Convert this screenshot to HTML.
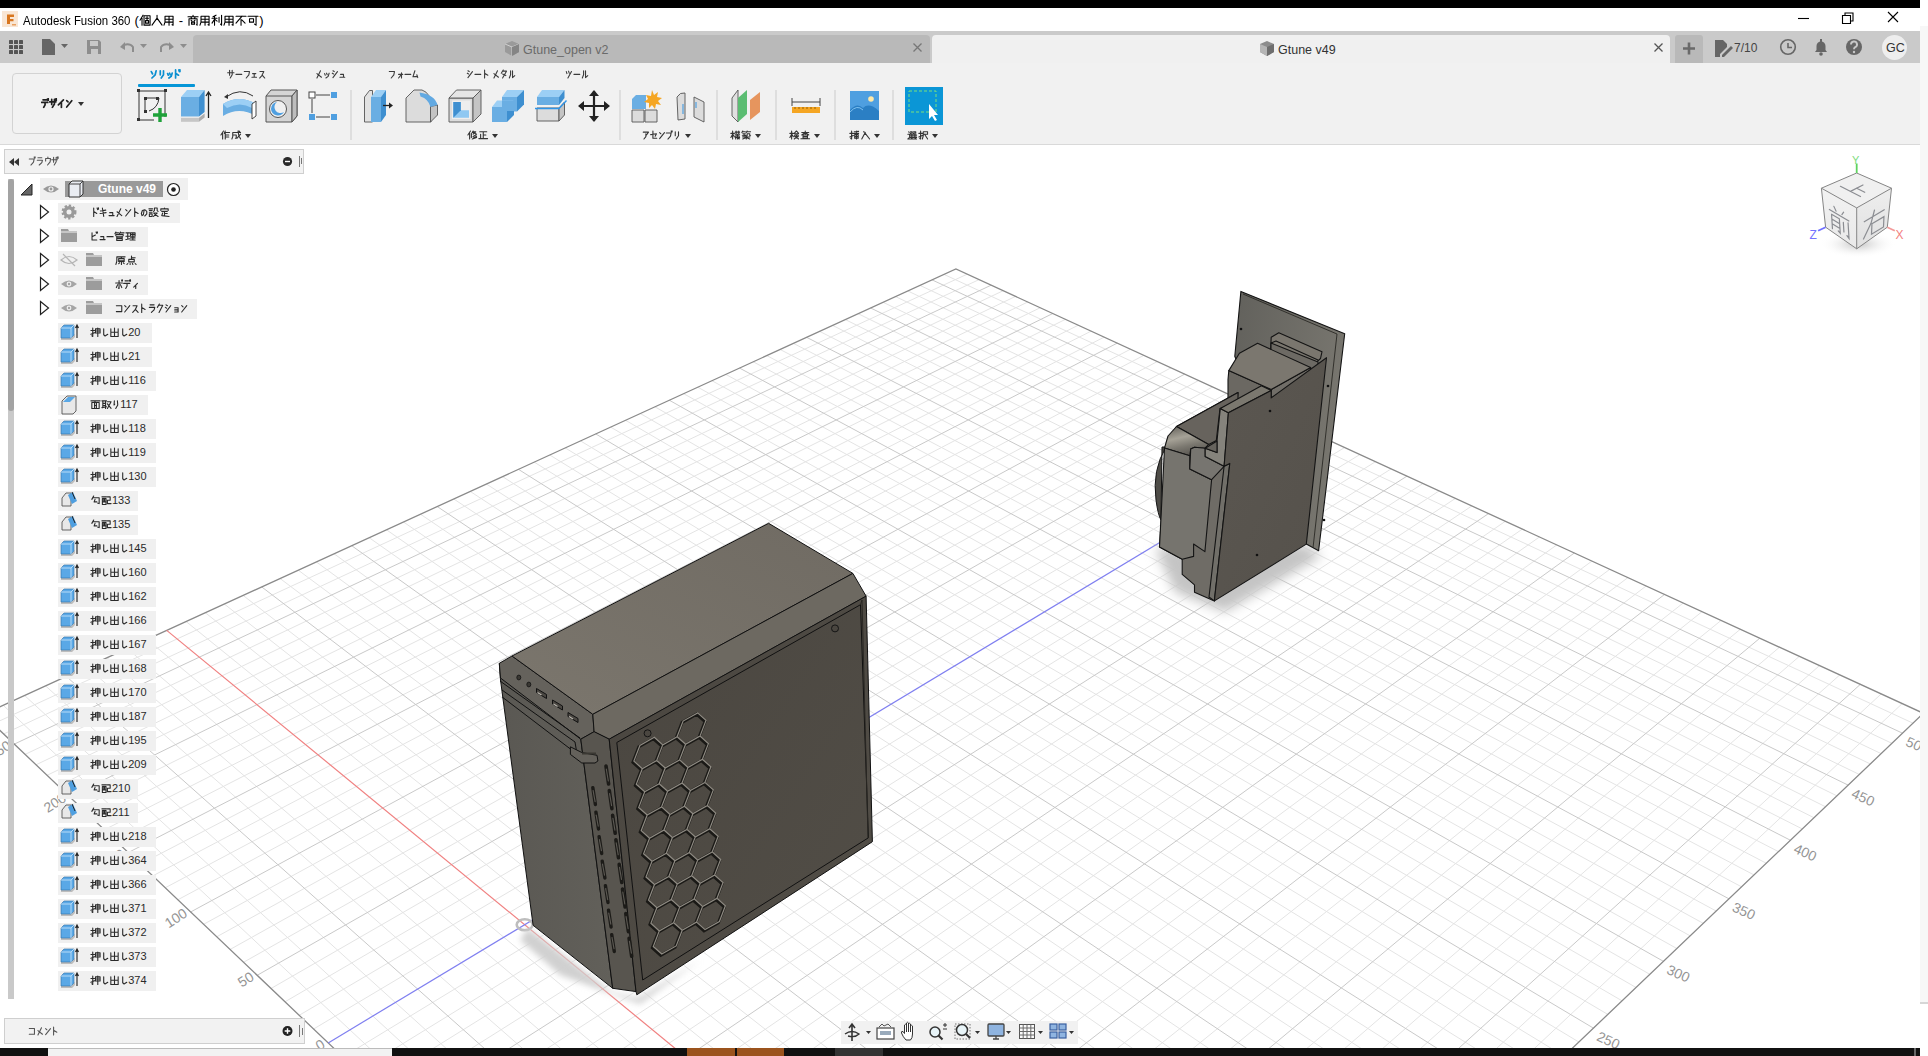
<!DOCTYPE html>
<html><head><meta charset="utf-8">
<style>
*{box-sizing:border-box;margin:0;padding:0}
html,body{width:1928px;height:1056px;overflow:hidden;background:#fff;font-family:"Liberation Sans",sans-serif;color:#333}
.abs{position:absolute}
#scene{position:absolute;left:0;top:0}
.g{display:inline-block;height:.95em;vertical-align:-.1em;overflow:visible;stroke-width:1.1px}
.bd .g{stroke-width:1.7px}
.tt .g.j{width:.93em}
.g.j{width:1em}
.g.n{width:.74em}
.g use{width:100%;height:100%}
.dd{display:inline-block;width:0;height:0;border-left:3.5px solid transparent;border-right:3.5px solid transparent;border-top:4px solid #333;margin-left:4px;vertical-align:1px}
.t{position:absolute;white-space:nowrap;font-size:11px;line-height:12px;color:#3c3c3c}
</style></head><body>
<svg id="scene" width="1928" height="1056" viewBox="0 0 1928 1056">
<defs>
<radialGradient id="sh2" cx="0.5" cy="0.5" r="0.5"><stop offset="0" stop-color="#cfcfcf"/><stop offset="1" stop-color="#fff" stop-opacity="0"/></radialGradient>
<filter id="blur6" x="-50%" y="-50%" width="200%" height="200%"><feGaussianBlur stdDeviation="6"/></filter>
<filter id="blur3" x="-50%" y="-50%" width="200%" height="200%"><feGaussianBlur stdDeviation="3"/></filter>
</defs>
<path d="M929.7 1615.5L1902.2 703.6M905.9 1592.8L1881.2 693.9M859.4 1548.6L1839.8 674.9M836.8 1527.0L1819.5 665.6M814.5 1505.8L1799.4 656.3M792.6 1485.0L1779.5 647.2M749.9 1444.3L1740.4 629.2M729.1 1424.5L1721.1 620.4M708.6 1405.0L1702.1 611.6M688.4 1385.8L1683.2 603.0M649.0 1348.3L1646.1 586.0M629.8 1329.9L1627.9 577.6M610.8 1311.9L1609.8 569.3M592.1 1294.2L1591.9 561.1M555.7 1259.4L1556.8 544.9M537.9 1242.5L1539.4 537.0M520.3 1225.8L1522.3 529.1M503.0 1209.3L1505.3 521.3M469.1 1177.1L1471.9 505.9M452.6 1161.3L1455.4 498.4M436.3 1145.8L1439.1 490.9M420.2 1130.4L1422.9 483.5M388.7 1100.5L1391.1 468.9M373.2 1085.8L1375.5 461.7M358.0 1071.3L1359.9 454.5M343.0 1057.0L1344.6 447.5M313.6 1029.0L1314.3 433.6M299.2 1015.3L1299.3 426.7M285.0 1001.8L1284.5 419.9M271.0 988.5L1269.9 413.2M243.5 962.3L1241.0 399.9M230.0 949.5L1226.7 393.4M216.7 936.8L1212.6 386.9M203.6 924.3L1198.6 380.5M177.8 899.8L1171.0 367.8M165.2 887.8L1157.4 361.5M152.7 875.9L1143.9 355.3M140.4 864.1L1130.5 349.2M116.2 841.1L1104.2 337.1M104.3 829.8L1091.2 331.1M92.6 818.6L1078.3 325.2M81.0 807.6L1065.5 319.3M58.2 785.9L1040.3 307.7M47.1 775.3L1027.8 302.0M36.0 764.8L1015.5 296.4M25.1 754.4L1003.2 290.7M3.6 734.0L979.1 279.6M-6.9 723.9L967.1 274.2M3.3 705.3L976.6 1616.6M24.6 695.5L1000.5 1593.8M45.6 685.9L1024.1 1571.4M86.9 667.0L1069.9 1527.7M107.1 657.7L1092.2 1506.4M127.2 648.5L1114.1 1485.4M147.1 639.4L1135.7 1464.8M186.1 621.5L1177.8 1424.6M205.3 612.7L1198.4 1405.0M224.3 604.0L1218.6 1385.7M243.1 595.4L1238.5 1366.8M280.1 578.5L1277.3 1329.7M298.3 570.2L1296.3 1311.6M316.3 561.9L1315.0 1293.8M334.1 553.8L1333.4 1276.2M369.2 537.7L1369.3 1241.9M386.5 529.8L1386.9 1225.2M403.5 522.0L1404.2 1208.7M420.5 514.2L1421.2 1192.4M453.8 499.0L1454.6 1160.6M470.2 491.4L1470.9 1145.0M486.4 484.0L1487.0 1129.6M502.5 476.6L1502.8 1114.5M534.2 462.1L1533.9 1084.9M549.8 455.0L1549.1 1070.4M565.2 447.9L1564.0 1056.1M580.5 440.9L1578.8 1042.0M610.7 427.1L1607.8 1014.4M625.6 420.3L1622.0 1000.8M640.3 413.5L1636.0 987.5M654.9 406.8L1649.8 974.3M683.7 393.7L1676.8 948.5M697.8 387.2L1690.1 935.8M711.9 380.7L1703.2 923.3M725.8 374.4L1716.1 911.0M753.2 361.8L1741.5 886.8M766.8 355.6L1753.9 874.9M780.2 349.5L1766.2 863.2M793.5 343.4L1778.4 851.6M819.7 331.4L1802.2 828.9M832.6 325.4L1813.9 817.7M845.4 319.6L1825.4 806.7M858.2 313.7L1836.8 795.8M883.2 302.3L1859.2 774.4M895.6 296.6L1870.2 763.9M907.9 291.0L1881.1 753.6M920.0 285.4L1891.9 743.3M944.0 274.4L1913.0 723.2" stroke="#e4e4e4" stroke-width="1" fill="none"/>
<path d="M882.4 1570.5L1860.4 684.3M771.1 1464.5L1759.8 638.2M668.5 1366.9L1664.6 594.4M573.8 1276.7L1574.3 553.0M485.9 1193.1L1488.5 513.6M404.3 1115.3L1407.0 476.1M257.2 975.3L1255.3 406.5M190.6 912.0L1184.7 374.1M128.2 852.6L1117.3 343.1M69.6 796.7L1052.8 313.5M14.3 744.1L991.1 285.2M66.3 676.4L1047.2 1549.3M261.7 586.9L1258.1 1348.1M351.7 545.7L1351.5 1258.9M437.2 506.5L1438.0 1176.4M518.4 469.3L1518.5 1099.6M595.7 433.9L1593.4 1028.1M669.3 400.2L1663.4 961.3M739.6 368.1L1728.9 898.8M806.6 337.3L1790.3 840.2M870.7 308.0L1848.1 785.1M932.1 279.9L1902.5 733.2" stroke="#c9c9c9" stroke-width="1" fill="none"/>
<path d="M-16.8 714.5L955.9 269.0L1923.4 713.3L953.8 1638.4Z" stroke="#8a8a8a" stroke-width="1.3" fill="none"/>
<path d="M166.7 630.4L1157.0 1444.6" stroke="#f08080" stroke-width="1.2"/>
<path d="M328.2 1042.9L1329.3 440.5" stroke="#7f7ff0" stroke-width="1.2"/>
<ellipse cx="524.7" cy="924.7" rx="8" ry="5.5" stroke="#bdbdbd" stroke-width="2.6" fill="none"/>
<g font-family="Liberation Sans" font-size="14" fill="#959595"><text x="324.2" y="1044.9" transform="rotate(-33 328.2 1042.9)" text-anchor="end">0</text><text x="253.2" y="977.3" transform="rotate(-33 257.2 975.3)" text-anchor="end">50</text><text x="186.6" y="914.0" transform="rotate(-33 190.6 912.0)" text-anchor="end">100</text><text x="124.2" y="854.6" transform="rotate(-33 128.2 852.6)" text-anchor="end">150</text><text x="65.6" y="798.7" transform="rotate(-33 69.6 796.7)" text-anchor="end">200</text><text x="10.3" y="746.1" transform="rotate(-33 14.3 744.1)" text-anchor="end">250</text><text x="1164.0" y="1454.6" transform="rotate(24 1157.0 1444.6)">0</text><text x="1265.1" y="1358.1" transform="rotate(24 1258.1 1348.1)">50</text><text x="1358.5" y="1268.9" transform="rotate(24 1351.5 1258.9)">100</text><text x="1445.0" y="1186.4" transform="rotate(24 1438.0 1176.4)">150</text><text x="1525.5" y="1109.6" transform="rotate(24 1518.5 1099.6)">200</text><text x="1600.4" y="1038.1" transform="rotate(24 1593.4 1028.1)">250</text><text x="1670.4" y="971.3" transform="rotate(24 1663.4 961.3)">300</text><text x="1735.9" y="908.8" transform="rotate(24 1728.9 898.8)">350</text><text x="1797.3" y="850.2" transform="rotate(24 1790.3 840.2)">400</text><text x="1855.1" y="795.1" transform="rotate(24 1848.1 785.1)">450</text><text x="1909.5" y="743.2" transform="rotate(24 1902.5 733.2)">500</text></g>

<g filter="url(#blur6)"><polygon points="1155.0,548.0 1306.0,545.0 1322.0,556.0 1225.0,612.0 1175.0,592.0" fill="#c4c4c4"/></g>
<g filter="url(#blur3)"><polygon points="528.0,928.0 612.0,992.0 638.0,998.0 700.0,960.0 640.0,1004.0 560.0,975.0 520.0,940.0" fill="#d0d0d0"/></g>
<defs><linearGradient id="gfront" x1="0" y1="0" x2="1" y2="0"><stop offset="0" stop-color="#5a5853"/><stop offset="1" stop-color="#62605a"/></linearGradient><linearGradient id="gtop" x1="0" y1="1" x2="1" y2="0"><stop offset="0" stop-color="#7b766d"/><stop offset="1" stop-color="#706b63"/></linearGradient><linearGradient id="gside" x1="0" y1="0" x2="1" y2="1"><stop offset="0" stop-color="#4a4640"/><stop offset="1" stop-color="#524e47"/></linearGradient></defs>
<polygon points="499.3,663.3 500.5,680.0 533.1,925.3 612.7,988.3 580.8,739.2" fill="url(#gfront)" stroke="#111" stroke-width="1" stroke-linejoin="round"/>
<polygon points="499.3,663.3 512.0,656.0 592.8,714.3 594.1,731.7 580.8,739.2 500.5,678.0" fill="#65625c" stroke="#111" stroke-width="1" stroke-linejoin="round"/>
<polygon points="512.0,656.0 768.6,523.3 852.9,573.4 592.8,714.3" fill="url(#gtop)" stroke="#111" stroke-width="1" stroke-linejoin="round"/>
<polygon points="592.8,714.3 852.9,573.4 866.1,596.2 609.2,739.2 594.1,731.7" fill="#6d6961" stroke="#111" stroke-width="1" stroke-linejoin="round"/>
<polygon points="580.8,739.2 594.1,731.7 609.2,739.2 636.0,991.6 612.7,988.3" fill="#58554f" stroke="#111" stroke-width="1" stroke-linejoin="round"/>
<polygon points="609.2,739.2 866.1,596.2 872.4,841.7 636.8,994.8 636.0,991.6" fill="url(#gside)" stroke="#111" stroke-width="1" stroke-linejoin="round"/>
<polygon points="616.8,742.5 860.5,604.7 868.4,837.8 642.7,980.0" fill="none" stroke="#111" stroke-width="1" stroke-linejoin="round"/>
<polyline points="860.5,604.7 862.0,600.0 868.0,838.0" fill="none" stroke="#2a2824" stroke-width="1"/>
<polyline points="502.0,690.0 575.0,742.0 578.0,760.0" fill="none" stroke="#111" stroke-width="1" stroke-linejoin="round"/>
<polyline points="500.0,681.0 580.0,738.0" fill="none" stroke="#111" stroke-width="1" stroke-linejoin="round"/>
<polyline points="502.2,697.0 570.0,748.7" fill="none" stroke="#111" stroke-width="1" stroke-linejoin="round"/>
<ellipse cx="518.8" cy="677.5" rx="2" ry="2.4" fill="#3a3833" stroke="#111" stroke-width="0.8"/>
<ellipse cx="528.8" cy="684.5" rx="2" ry="2.4" fill="#3a3833" stroke="#111" stroke-width="0.8"/>
<polygon points="536.5,688.5 546.5,694.5 546.5,698.5 536.5,692.5" fill="#4a4742" stroke="#111" stroke-width="1"/>
<path d="M537.5 692.5l4 2.5" stroke="#b8b4ac" stroke-width="1.2"/>
<polygon points="552.5,700.0 562.5,706.0 562.5,710.0 552.5,704.0" fill="#4a4742" stroke="#111" stroke-width="1"/>
<path d="M553.5 704.0l4 2.5" stroke="#b8b4ac" stroke-width="1.2"/>
<polygon points="568.0,712.5 578.0,718.5 578.0,722.5 568.0,716.5" fill="#4a4742" stroke="#111" stroke-width="1"/>
<path d="M569.0 716.5l4 2.5" stroke="#b8b4ac" stroke-width="1.2"/>
<polygon points="570.4,746.8 581.8,752.5 597.0,755.3 597.9,761.0 595.0,763.0 581.8,763.0 570.4,754.4" fill="#64615b" stroke="#111" stroke-width="1" stroke-linejoin="round"/>
<path d="M582 753.5h14" stroke="#3a3833" stroke-width="2"/>
<line x1="606.0" y1="766.0" x2="608.6" y2="784.0" stroke="#1c1b18" stroke-width="3.6" stroke-linecap="round"/>
<line x1="606.3" y1="769.0" x2="608.3" y2="781.0" stroke="#5d5a54" stroke-width="1.1" stroke-linecap="round"/>
<line x1="609.3" y1="790.6" x2="611.9" y2="808.6" stroke="#1c1b18" stroke-width="3.6" stroke-linecap="round"/>
<line x1="609.6" y1="793.6" x2="611.6" y2="805.6" stroke="#5d5a54" stroke-width="1.1" stroke-linecap="round"/>
<line x1="612.6" y1="815.2" x2="615.2" y2="833.2" stroke="#1c1b18" stroke-width="3.6" stroke-linecap="round"/>
<line x1="612.9" y1="818.2" x2="614.9" y2="830.2" stroke="#5d5a54" stroke-width="1.1" stroke-linecap="round"/>
<line x1="615.9" y1="839.8" x2="618.5" y2="857.8" stroke="#1c1b18" stroke-width="3.6" stroke-linecap="round"/>
<line x1="616.2" y1="842.8" x2="618.2" y2="854.8" stroke="#5d5a54" stroke-width="1.1" stroke-linecap="round"/>
<line x1="619.2" y1="864.4" x2="621.8" y2="882.4" stroke="#1c1b18" stroke-width="3.6" stroke-linecap="round"/>
<line x1="619.5" y1="867.4" x2="621.5" y2="879.4" stroke="#5d5a54" stroke-width="1.1" stroke-linecap="round"/>
<line x1="622.5" y1="889.0" x2="625.1" y2="907.0" stroke="#1c1b18" stroke-width="3.6" stroke-linecap="round"/>
<line x1="622.8" y1="892.0" x2="624.8" y2="904.0" stroke="#5d5a54" stroke-width="1.1" stroke-linecap="round"/>
<line x1="625.8" y1="913.6" x2="628.4" y2="931.6" stroke="#1c1b18" stroke-width="3.6" stroke-linecap="round"/>
<line x1="626.1" y1="916.6" x2="628.1" y2="928.6" stroke="#5d5a54" stroke-width="1.1" stroke-linecap="round"/>
<line x1="629.1" y1="938.2" x2="631.7" y2="956.2" stroke="#1c1b18" stroke-width="3.6" stroke-linecap="round"/>
<line x1="629.4" y1="941.2" x2="631.4" y2="953.2" stroke="#5d5a54" stroke-width="1.1" stroke-linecap="round"/>
<line x1="592.8" y1="787.6" x2="595.4" y2="804.6" stroke="#1c1b18" stroke-width="3.4" stroke-linecap="round"/>
<line x1="593.1" y1="790.6" x2="595.1" y2="801.6" stroke="#5d5a54" stroke-width="1.1" stroke-linecap="round"/>
<line x1="595.9" y1="812.1" x2="598.5" y2="829.1" stroke="#1c1b18" stroke-width="3.4" stroke-linecap="round"/>
<line x1="596.2" y1="815.1" x2="598.2" y2="826.1" stroke="#5d5a54" stroke-width="1.1" stroke-linecap="round"/>
<line x1="599.1" y1="836.6" x2="601.7" y2="853.6" stroke="#1c1b18" stroke-width="3.4" stroke-linecap="round"/>
<line x1="599.4" y1="839.6" x2="601.4" y2="850.6" stroke="#5d5a54" stroke-width="1.1" stroke-linecap="round"/>
<line x1="602.2" y1="861.1" x2="604.9" y2="878.1" stroke="#1c1b18" stroke-width="3.4" stroke-linecap="round"/>
<line x1="602.5" y1="864.1" x2="604.5" y2="875.1" stroke="#5d5a54" stroke-width="1.1" stroke-linecap="round"/>
<line x1="605.4" y1="885.6" x2="608.0" y2="902.6" stroke="#1c1b18" stroke-width="3.4" stroke-linecap="round"/>
<line x1="605.7" y1="888.6" x2="607.7" y2="899.6" stroke="#5d5a54" stroke-width="1.1" stroke-linecap="round"/>
<line x1="608.5" y1="910.1" x2="611.1" y2="927.1" stroke="#1c1b18" stroke-width="3.4" stroke-linecap="round"/>
<line x1="608.8" y1="913.1" x2="610.8" y2="924.1" stroke="#5d5a54" stroke-width="1.1" stroke-linecap="round"/>
<line x1="611.7" y1="934.6" x2="614.3" y2="951.6" stroke="#1c1b18" stroke-width="3.4" stroke-linecap="round"/>
<line x1="612.0" y1="937.6" x2="614.0" y2="948.6" stroke="#5d5a54" stroke-width="1.1" stroke-linecap="round"/>
<circle cx="835" cy="628.4" r="3.5" fill="#4a4640" stroke="#151515" stroke-width="1"/>
<circle cx="647.6" cy="733.3" r="3.5" fill="#4a4640" stroke="#151515" stroke-width="1"/>
<path d="M661.7 746.2L655.7 761.8L641.3 770.0L632.9 762.4L638.9 746.8L653.3 738.6ZM664.2 769.3L658.2 785.0L643.7 793.1L635.3 785.6L641.3 770.0L655.7 761.8ZM666.6 792.5L660.6 808.2L646.2 816.3L637.7 808.8L643.7 793.1L658.2 785.0ZM669.0 815.7L663.0 831.3L648.6 839.5L640.2 832.0L646.2 816.3L660.6 808.2ZM671.4 838.8L665.4 854.5L651.0 862.6L642.6 855.1L648.6 839.5L663.0 831.3ZM673.9 862.0L667.9 877.7L653.5 885.8L645.0 878.3L651.0 862.6L665.4 854.5ZM676.3 885.2L670.3 900.8L655.9 909.0L647.5 901.5L653.5 885.8L667.9 877.7ZM678.7 908.4L672.7 924.0L658.3 932.2L649.9 924.6L655.9 909.0L670.3 900.8ZM681.2 931.5L675.2 947.2L660.7 955.3L652.3 947.8L658.3 932.2L672.7 924.0ZM684.6 745.5L678.6 761.2L664.2 769.3L655.7 761.8L661.7 746.2L676.2 738.0ZM687.0 768.7L681.0 784.4L666.6 792.5L658.2 785.0L664.2 769.3L678.6 761.2ZM689.4 791.9L683.4 807.5L669.0 815.7L660.6 808.2L666.6 792.5L681.0 784.4ZM691.9 815.0L685.9 830.7L671.4 838.8L663.0 831.3L669.0 815.7L683.4 807.5ZM694.3 838.2L688.3 853.9L673.9 862.0L665.4 854.5L671.4 838.8L685.9 830.7ZM696.7 861.4L690.7 877.0L676.3 885.2L667.9 877.7L673.9 862.0L688.3 853.9ZM699.2 884.6L693.2 900.2L678.7 908.4L670.3 900.8L676.3 885.2L690.7 877.0ZM701.6 907.7L695.6 923.4L681.2 931.5L672.7 924.0L678.7 908.4L693.2 900.2ZM705.0 721.7L699.0 737.4L684.6 745.5L676.1 738.0L682.1 722.4L696.6 714.2ZM707.4 744.9L701.4 760.6L687.0 768.7L678.6 761.2L684.6 745.5L699.0 737.4ZM709.9 768.1L703.9 783.7L689.4 791.9L681.0 784.4L687.0 768.7L701.4 760.6ZM712.3 791.2L706.3 806.9L691.9 815.0L683.4 807.5L689.4 791.9L703.9 783.7ZM714.7 814.4L708.7 830.1L694.3 838.2L685.9 830.7L691.9 815.0L706.3 806.9ZM717.2 837.6L711.2 853.2L696.7 861.4L688.3 853.9L694.3 838.2L708.7 830.1ZM719.6 860.8L713.6 876.4L699.2 884.6L690.7 877.0L696.7 861.4L711.2 853.2ZM722.0 883.9L716.0 899.6L701.6 907.7L693.2 900.2L699.2 884.6L713.6 876.4ZM724.4 907.1L718.4 922.8L704.0 930.9L695.6 923.4L701.6 907.7L716.0 899.6Z" fill="none" stroke="#1a1916" stroke-width="3"/>
<path d="M662.7 744.9L656.7 760.5L642.3 768.7L633.9 761.1L639.9 745.5L654.3 737.3ZM665.2 768.0L659.2 783.7L644.7 791.8L636.3 784.3L642.3 768.7L656.7 760.5ZM667.6 791.2L661.6 806.9L647.2 815.0L638.7 807.5L644.7 791.8L659.2 783.7ZM670.0 814.4L664.0 830.0L649.6 838.2L641.2 830.7L647.2 815.0L661.6 806.9ZM672.4 837.5L666.4 853.2L652.0 861.3L643.6 853.8L649.6 838.2L664.0 830.0ZM674.9 860.7L668.9 876.4L654.5 884.5L646.0 877.0L652.0 861.3L666.4 853.2ZM677.3 883.9L671.3 899.5L656.9 907.7L648.5 900.2L654.5 884.5L668.9 876.4ZM679.7 907.1L673.7 922.7L659.3 930.9L650.9 923.3L656.9 907.7L671.3 899.5ZM682.2 930.2L676.2 945.9L661.7 954.0L653.3 946.5L659.3 930.9L673.7 922.7ZM685.6 744.2L679.6 759.9L665.2 768.0L656.7 760.5L662.7 744.9L677.2 736.7ZM688.0 767.4L682.0 783.1L667.6 791.2L659.2 783.7L665.2 768.0L679.6 759.9ZM690.4 790.6L684.4 806.2L670.0 814.4L661.6 806.9L667.6 791.2L682.0 783.1ZM692.9 813.7L686.9 829.4L672.4 837.5L664.0 830.0L670.0 814.4L684.4 806.2ZM695.3 836.9L689.3 852.6L674.9 860.7L666.4 853.2L672.4 837.5L686.9 829.4ZM697.7 860.1L691.7 875.7L677.3 883.9L668.9 876.4L674.9 860.7L689.3 852.6ZM700.2 883.3L694.2 898.9L679.7 907.1L671.3 899.5L677.3 883.9L691.7 875.7ZM702.6 906.4L696.6 922.1L682.2 930.2L673.7 922.7L679.7 907.1L694.2 898.9ZM706.0 720.4L700.0 736.1L685.6 744.2L677.1 736.7L683.1 721.1L697.6 712.9ZM708.4 743.6L702.4 759.3L688.0 767.4L679.6 759.9L685.6 744.2L700.0 736.1ZM710.9 766.8L704.9 782.4L690.4 790.6L682.0 783.1L688.0 767.4L702.4 759.3ZM713.3 789.9L707.3 805.6L692.9 813.7L684.4 806.2L690.4 790.6L704.9 782.4ZM715.7 813.1L709.7 828.8L695.3 836.9L686.9 829.4L692.9 813.7L707.3 805.6ZM718.2 836.3L712.2 851.9L697.7 860.1L689.3 852.6L695.3 836.9L709.7 828.8ZM720.6 859.5L714.6 875.1L700.2 883.3L691.7 875.7L697.7 860.1L712.2 851.9ZM723.0 882.6L717.0 898.3L702.6 906.4L694.2 898.9L700.2 883.3L714.6 875.1ZM725.4 905.8L719.4 921.5L705.0 929.6L696.6 922.1L702.6 906.4L717.0 898.3Z" fill="none" stroke="#8e8a82" stroke-width="1.2"/>
<defs><linearGradient id="gplate" x1="0" y1="0" x2="1" y2="0.3"><stop offset="0" stop-color="#62615c"/><stop offset="1" stop-color="#78766f"/></linearGradient><linearGradient id="gcurve" x1="0" y1="0" x2="0.35" y2="1"><stop offset="0" stop-color="#5e5b55"/><stop offset="0.45" stop-color="#a6a297"/><stop offset="0.75" stop-color="#7a776f"/><stop offset="1" stop-color="#5f5c56"/></linearGradient><linearGradient id="gfp" x1="0" y1="0" x2="1" y2="1"><stop offset="0" stop-color="#5b5751"/><stop offset="1" stop-color="#55514b"/></linearGradient></defs>
<polygon points="1240.9,291.4 1344.7,333.8 1318.6,550.7 1306.3,544.1 1234.8,356.2" fill="url(#gplate)" stroke="#141414" stroke-width="1.1" stroke-linejoin="round"/>
<polyline points="1243.0,294.0 1337.0,334.0 1313.0,548.0" fill="none" stroke="#2a2925" stroke-width="0.9"/>
<polygon points="1271.2,337.3 1278.8,332.7 1322.0,351.7 1320.5,358.5 1310.6,367.6 1270.5,353.2" fill="#7a766e" stroke="#141414" stroke-width="1.1" stroke-linejoin="round"/>
<polyline points="1271.0,343.0 1276.0,341.0 1318.0,360.0" fill="none" stroke="#141414" stroke-width="1.1" stroke-linejoin="round"/>
<polygon points="1271.0,343.0 1318.0,362.0 1318.0,375.0 1271.0,356.0" fill="#6d6a64" stroke="#141414" stroke-width="1.1" stroke-linejoin="round"/>
<polygon points="1228.8,370.6 1271.2,389.5 1271.2,397.9 1238.0,410.0 1228.0,400.0 1228.0,379.7" fill="#6b6862" stroke="#141414" stroke-width="1.1" stroke-linejoin="round"/>
<polygon points="1310.6,367.6 1309.8,376.0 1271.2,397.9 1271.2,389.5" fill="#716e68" stroke="#141414" stroke-width="1.1" stroke-linejoin="round"/>
<polygon points="1228.8,370.6 1239.4,353.2 1257.6,343.3 1310.6,367.6 1271.2,389.5" fill="#7b776f" stroke="#141414" stroke-width="1.1" stroke-linejoin="round"/>
<polygon points="1166.0,445.0 1176.5,426.5 1238.0,392.5 1229.5,463.6 1215.3,592.3 1214.4,600.9 1194.5,592.3 1194.5,584.8 1182.2,574.4 1182.2,559.2 1159.5,546.9" fill="#6f6c66" stroke="#141414" stroke-width="1.1" stroke-linejoin="round"/>
<polygon points="1176.5,426.5 1238.0,392.5 1238.0,402.0 1220.0,408.4 1216.3,440.6 1208.7,444.4" fill="#67635d" stroke="#141414" stroke-width="1.1" stroke-linejoin="round"/>
<path d="M1166 447 Q1152 470 1156 500 Q1158 515 1161 520 L1162 447Z" fill="#4e4c47" stroke="#141414" stroke-width="1"/>
<polygon points="1164.5,448.0 1168.0,436.0 1176.5,426.5 1208.7,444.4 1205.0,448.2 1194.5,447.2 1190.7,449.1 1189.8,455.8" fill="url(#gcurve)" stroke="#141414" stroke-width="1.1" stroke-linejoin="round"/>
<polygon points="1164.5,448.0 1189.8,455.8 1189.8,469.0 1211.6,479.7 1204.9,551.6 1193.6,544.0 1193.6,556.4 1182.2,559.2 1159.5,546.9" fill="#76746e" stroke="#141414" stroke-width="1.1" stroke-linejoin="round"/>
<polygon points="1190.7,449.1 1194.5,447.2 1205.2,448.3 1205.2,456.5 1224.1,466.3 1211.6,479.7 1189.8,469.0" fill="#777570" stroke="#141414" stroke-width="1.1" stroke-linejoin="round"/>
<polygon points="1220.3,408.5 1228.4,412.8 1224.1,466.3 1205.2,456.5 1205.2,448.3 1217.0,452.6 1217.0,441.0" fill="#85837c" stroke="#141414" stroke-width="1.1" stroke-linejoin="round"/>
<polygon points="1205.2,448.3 1217.0,441.0 1217.0,452.6" fill="#66635d" stroke="#141414" stroke-width="1.1" stroke-linejoin="round"/>
<polygon points="1224.1,466.3 1229.8,463.4 1215.3,592.3 1214.4,600.9 1209.0,597.0" fill="#716f69" stroke="#141414" stroke-width="1.1" stroke-linejoin="round"/>
<polygon points="1220.3,408.5 1261.4,385.8 1271.2,390.5 1228.4,412.8" fill="#7b786f" stroke="#141414" stroke-width="1.1" stroke-linejoin="round"/>
<polygon points="1228.4,412.8 1271.2,390.5 1271.2,397.9 1326.5,357.7 1306.3,544.1 1214.4,600.9 1215.3,592.3 1229.8,463.4 1224.1,466.3" fill="url(#gfp)" stroke="#141414" stroke-width="1.1" stroke-linejoin="round"/>
<circle cx="1241" cy="329" r="1.3" fill="#111"/>
<circle cx="1270" cy="411" r="1.3" fill="#111"/>
<circle cx="1257" cy="555" r="1.3" fill="#111"/>
<circle cx="1328" cy="386" r="1.3" fill="#111"/>
<circle cx="1324" cy="520" r="1.3" fill="#111"/>
</svg>
<svg width="0" height="0" style="position:absolute"><defs><symbol id="u30bd" viewBox="-1 -1.2 12 12.4" preserveAspectRatio="none"><path d="M1 2 L3 5M8.5 1 L7 6 L2 10" fill="none" stroke="currentColor" vector-effect="non-scaling-stroke" stroke-linecap="round" stroke-linejoin="round"/></symbol><symbol id="u30ea" viewBox="-1 -1.2 12 12.4" preserveAspectRatio="none"><path d="M2.5 1 L2.5 6M7.5 1 L7.5 6 L4 10" fill="none" stroke="currentColor" vector-effect="non-scaling-stroke" stroke-linecap="round" stroke-linejoin="round"/></symbol><symbol id="u30c3" viewBox="-1 -1.2 12 12.4" preserveAspectRatio="none"><path d="M1.5 4.5 L2.5 6.5M4.5 4 L5.5 6M8.5 4 L7 8 L3.5 10" fill="none" stroke="currentColor" vector-effect="non-scaling-stroke" stroke-linecap="round" stroke-linejoin="round"/></symbol><symbol id="u30c9" viewBox="-1 -1.2 12 12.4" preserveAspectRatio="none"><path d="M3 0 L3 10M3 4 L7.5 6.5M8 0 L8.8 2M9.8 -0.3 L10.6 1.7" fill="none" stroke="currentColor" vector-effect="non-scaling-stroke" stroke-linecap="round" stroke-linejoin="round"/></symbol><symbol id="u30b5" viewBox="-1 -1.2 12 12.4" preserveAspectRatio="none"><path d="M0 3.5 L10 3.5M3 0.5 L3 6.5M7 0.5 L7 6 L4 10" fill="none" stroke="currentColor" vector-effect="non-scaling-stroke" stroke-linecap="round" stroke-linejoin="round"/></symbol><symbol id="u30b6" viewBox="-1 -1.2 12 12.4" preserveAspectRatio="none"><path d="M0 3.5 L9 3.5M3 0.5 L3 6.5M7 0.5 L7 6 L4 10M8.6 0 L9.2 1.8M10 -0.3 L10.6 1.5" fill="none" stroke="currentColor" vector-effect="non-scaling-stroke" stroke-linecap="round" stroke-linejoin="round"/></symbol><symbol id="u30fc" viewBox="-1 -1.2 12 12.4" preserveAspectRatio="none"><path d="M0.5 5.5 L9.5 5.5" fill="none" stroke="currentColor" vector-effect="non-scaling-stroke" stroke-linecap="round" stroke-linejoin="round"/></symbol><symbol id="u30d5" viewBox="-1 -1.2 12 12.4" preserveAspectRatio="none"><path d="M1 2 L9 2 L8 6 L4 10" fill="none" stroke="currentColor" vector-effect="non-scaling-stroke" stroke-linecap="round" stroke-linejoin="round"/></symbol><symbol id="u30d6" viewBox="-1 -1.2 12 12.4" preserveAspectRatio="none"><path d="M1 2.5 L8.5 2.5 L7.5 6.5 L3.5 10M8.5 0 L9 1.5M10 -0.3 L10.5 1.2" fill="none" stroke="currentColor" vector-effect="non-scaling-stroke" stroke-linecap="round" stroke-linejoin="round"/></symbol><symbol id="u30a7" viewBox="-1 -1.2 12 12.4" preserveAspectRatio="none"><path d="M3 4.5 L8 4.5M5.5 4.5 L5.5 9M2 9 L9 9" fill="none" stroke="currentColor" vector-effect="non-scaling-stroke" stroke-linecap="round" stroke-linejoin="round"/></symbol><symbol id="u30b9" viewBox="-1 -1.2 12 12.4" preserveAspectRatio="none"><path d="M2 2 L8 2 L5 7 L1.5 10M5.5 6.5 L9.5 10" fill="none" stroke="currentColor" vector-effect="non-scaling-stroke" stroke-linecap="round" stroke-linejoin="round"/></symbol><symbol id="u30e1" viewBox="-1 -1.2 12 12.4" preserveAspectRatio="none"><path d="M7.5 1 L2 10M2 4.5 L9 9" fill="none" stroke="currentColor" vector-effect="non-scaling-stroke" stroke-linecap="round" stroke-linejoin="round"/></symbol><symbol id="u30e5" viewBox="-1 -1.2 12 12.4" preserveAspectRatio="none"><path d="M3 5.5 L7.5 5.5 L7.5 9M2 9 L9.5 9" fill="none" stroke="currentColor" vector-effect="non-scaling-stroke" stroke-linecap="round" stroke-linejoin="round"/></symbol><symbol id="u30b7" viewBox="-1 -1.2 12 12.4" preserveAspectRatio="none"><path d="M2 1 L4 2M1 4 L3 5M2 9.5 L9 2" fill="none" stroke="currentColor" vector-effect="non-scaling-stroke" stroke-linecap="round" stroke-linejoin="round"/></symbol><symbol id="u30b8" viewBox="-1 -1.2 12 12.4" preserveAspectRatio="none"><path d="M2 1 L4 2M1 4 L3 5M2 9.5 L9 2M8 0 L8.6 1.5M9.7 -0.2 L10.3 1.3" fill="none" stroke="currentColor" vector-effect="non-scaling-stroke" stroke-linecap="round" stroke-linejoin="round"/></symbol><symbol id="u30a9" viewBox="-1 -1.2 12 12.4" preserveAspectRatio="none"><path d="M3 5.5 L9.5 5.5M7.5 3.5 L7.5 10M7.5 5.5 L3 10" fill="none" stroke="currentColor" vector-effect="non-scaling-stroke" stroke-linecap="round" stroke-linejoin="round"/></symbol><symbol id="u30e0" viewBox="-1 -1.2 12 12.4" preserveAspectRatio="none"><path d="M5 1 L2 8.5 L9 8M8 6 L9.5 9.5" fill="none" stroke="currentColor" vector-effect="non-scaling-stroke" stroke-linecap="round" stroke-linejoin="round"/></symbol><symbol id="u30c8" viewBox="-1 -1.2 12 12.4" preserveAspectRatio="none"><path d="M3 0 L3 10M3 4 L8 6.5" fill="none" stroke="currentColor" vector-effect="non-scaling-stroke" stroke-linecap="round" stroke-linejoin="round"/></symbol><symbol id="u30bf" viewBox="-1 -1.2 12 12.4" preserveAspectRatio="none"><path d="M4 0 L1 4M4 1.5 L9 1.5 L3 10M3 5 L8 7" fill="none" stroke="currentColor" vector-effect="non-scaling-stroke" stroke-linecap="round" stroke-linejoin="round"/></symbol><symbol id="u30eb" viewBox="-1 -1.2 12 12.4" preserveAspectRatio="none"><path d="M3 1 L3 6 L1 10M6 1 L6 9.5 L9.5 7" fill="none" stroke="currentColor" vector-effect="non-scaling-stroke" stroke-linecap="round" stroke-linejoin="round"/></symbol><symbol id="u30c4" viewBox="-1 -1.2 12 12.4" preserveAspectRatio="none"><path d="M1 2 L2 4.5M4.5 1.5 L5.5 4M9 2 L3.5 10" fill="none" stroke="currentColor" vector-effect="non-scaling-stroke" stroke-linecap="round" stroke-linejoin="round"/></symbol><symbol id="u30c7" viewBox="-1 -1.2 12 12.4" preserveAspectRatio="none"><path d="M2 1 L7 1M0 4 L9 4M5 4 L5 7 L3 10M8.5 0 L9.1 1.6M10 -0.3 L10.6 1.3" fill="none" stroke="currentColor" vector-effect="non-scaling-stroke" stroke-linecap="round" stroke-linejoin="round"/></symbol><symbol id="u30a4" viewBox="-1 -1.2 12 12.4" preserveAspectRatio="none"><path d="M8.5 1 L1 7M5.5 4.5 L5.5 10" fill="none" stroke="currentColor" vector-effect="non-scaling-stroke" stroke-linecap="round" stroke-linejoin="round"/></symbol><symbol id="u30f3" viewBox="-1 -1.2 12 12.4" preserveAspectRatio="none"><path d="M1.5 2 L3.5 3.5M1.5 9.5 L9 2" fill="none" stroke="currentColor" vector-effect="non-scaling-stroke" stroke-linecap="round" stroke-linejoin="round"/></symbol><symbol id="u30a2" viewBox="-1 -1.2 12 12.4" preserveAspectRatio="none"><path d="M1 1.5 L9 1.5 L6 5M5 3.5 L5 7 L2 10" fill="none" stroke="currentColor" vector-effect="non-scaling-stroke" stroke-linecap="round" stroke-linejoin="round"/></symbol><symbol id="u30bb" viewBox="-1 -1.2 12 12.4" preserveAspectRatio="none"><path d="M0 4.5 L9 3.5 L7 6.5M3.5 0 L3.5 9 L9.5 9" fill="none" stroke="currentColor" vector-effect="non-scaling-stroke" stroke-linecap="round" stroke-linejoin="round"/></symbol><symbol id="u30e9" viewBox="-1 -1.2 12 12.4" preserveAspectRatio="none"><path d="M2 1 L8 1M1 4 L9 4 L8 7 L4 10" fill="none" stroke="currentColor" vector-effect="non-scaling-stroke" stroke-linecap="round" stroke-linejoin="round"/></symbol><symbol id="u30a6" viewBox="-1 -1.2 12 12.4" preserveAspectRatio="none"><path d="M5 0 L5 2M1.5 2 L1.5 5M1.5 2 L9 2 L8.5 6 L4.5 10" fill="none" stroke="currentColor" vector-effect="non-scaling-stroke" stroke-linecap="round" stroke-linejoin="round"/></symbol><symbol id="u30b3" viewBox="-1 -1.2 12 12.4" preserveAspectRatio="none"><path d="M1 2 L9 2 L9 9 L1 9" fill="none" stroke="currentColor" vector-effect="non-scaling-stroke" stroke-linecap="round" stroke-linejoin="round"/></symbol><symbol id="u30af" viewBox="-1 -1.2 12 12.4" preserveAspectRatio="none"><path d="M4 0 L1 4M4 1.5 L9 1.5 L3.5 10" fill="none" stroke="currentColor" vector-effect="non-scaling-stroke" stroke-linecap="round" stroke-linejoin="round"/></symbol><symbol id="u30e7" viewBox="-1 -1.2 12 12.4" preserveAspectRatio="none"><path d="M3 4.5 L8 4.5 L8 9.5 L3 9.5M3 7 L8 7" fill="none" stroke="currentColor" vector-effect="non-scaling-stroke" stroke-linecap="round" stroke-linejoin="round"/></symbol><symbol id="u30d3" viewBox="-1 -1.2 12 12.4" preserveAspectRatio="none"><path d="M2 1 L2 9.5 L9 9.5M2 5.5 L7 3.5M8 0 L8.6 1.5M9.7 -0.2 L10.3 1.3" fill="none" stroke="currentColor" vector-effect="non-scaling-stroke" stroke-linecap="round" stroke-linejoin="round"/></symbol><symbol id="u30dc" viewBox="-1 -1.2 12 12.4" preserveAspectRatio="none"><path d="M0 3.5 L10 3.5M5 0.5 L5 10 L4 9.5M3 5.5 L1 9M7 5.5 L9 9M8.7 0 L9.1 1.3M9.9 -0.2 L10.4 1.1" fill="none" stroke="currentColor" vector-effect="non-scaling-stroke" stroke-linecap="round" stroke-linejoin="round"/></symbol><symbol id="u30a3" viewBox="-1 -1.2 12 12.4" preserveAspectRatio="none"><path d="M8.5 4 L3 8.5M6 6.5 L6 10" fill="none" stroke="currentColor" vector-effect="non-scaling-stroke" stroke-linecap="round" stroke-linejoin="round"/></symbol><symbol id="u30ad" viewBox="-1 -1.2 12 12.4" preserveAspectRatio="none"><path d="M1 3.5 L9 2.5M0.5 6.5 L9.5 5.5M4 0 L6 10" fill="none" stroke="currentColor" vector-effect="non-scaling-stroke" stroke-linecap="round" stroke-linejoin="round"/></symbol><symbol id="u306e" viewBox="-1 -1.2 12 12.4" preserveAspectRatio="none"><path d="M5 3 L4 8 L2 9 L1 6.5 L2.5 3 L6 2 L9 4 L9 7 L6 9.5" fill="none" stroke="currentColor" vector-effect="non-scaling-stroke" stroke-linecap="round" stroke-linejoin="round"/></symbol><symbol id="u3057" viewBox="-1 -1.2 12 12.4" preserveAspectRatio="none"><path d="M3 1 L3 8 L5 9.5 L9 7.5" fill="none" stroke="currentColor" vector-effect="non-scaling-stroke" stroke-linecap="round" stroke-linejoin="round"/></symbol><symbol id="u308a" viewBox="-1 -1.2 12 12.4" preserveAspectRatio="none"><path d="M2.5 1 L2 6 L3 5M7 1 L7.5 6 L4.5 10" fill="none" stroke="currentColor" vector-effect="non-scaling-stroke" stroke-linecap="round" stroke-linejoin="round"/></symbol><symbol id="u62bc" viewBox="-1 -1.2 12 12.4" preserveAspectRatio="none"><path d="M0 3 L4 3M2 0 L2 10 L1 9.3M0 7.5 L4 5.5M5 1 L10 1 L10 6 L5 6 L5 1M5 3.5 L10 3.5M7.5 0 L7.5 10" fill="none" stroke="currentColor" vector-effect="non-scaling-stroke" stroke-linecap="round" stroke-linejoin="round"/></symbol><symbol id="u51fa" viewBox="-1 -1.2 12 12.4" preserveAspectRatio="none"><path d="M5 0 L5 10M1 1 L1 5 L9 5 L9 1M1 6 L1 10 L9 10 L9 6" fill="none" stroke="currentColor" vector-effect="non-scaling-stroke" stroke-linecap="round" stroke-linejoin="round"/></symbol><symbol id="u52fe" viewBox="-1 -1.2 12 12.4" preserveAspectRatio="none"><path d="M3 0 L1 4M2 2 L9 2 L9 9 L7.5 8.5M4.5 4 L3.5 7 L6.5 7" fill="none" stroke="currentColor" vector-effect="non-scaling-stroke" stroke-linecap="round" stroke-linejoin="round"/></symbol><symbol id="u914d" viewBox="-1 -1.2 12 12.4" preserveAspectRatio="none"><path d="M0 1 L5 1M0.5 3 L4.5 3 L4.5 10 L0.5 10 L0.5 3M0.5 7 L4.5 7M2 3 L2 5.5M3 3 L3 5.5M6 1 L9 1 L9 5 L6 5 L6 9 L10 9" fill="none" stroke="currentColor" vector-effect="non-scaling-stroke" stroke-linecap="round" stroke-linejoin="round"/></symbol><symbol id="u9762" viewBox="-1 -1.2 12 12.4" preserveAspectRatio="none"><path d="M0 1 L10 1M5 1 L4 3M1 3 L9 3 L9 10 L1 10 L1 3M4 3 L4 10M6 3 L6 10M4 6.5 L6 6.5" fill="none" stroke="currentColor" vector-effect="non-scaling-stroke" stroke-linecap="round" stroke-linejoin="round"/></symbol><symbol id="u53d6" viewBox="-1 -1.2 12 12.4" preserveAspectRatio="none"><path d="M0 1 L5 1M1 1 L1 9M4 1 L4 10M1 4 L4 4M1 6.5 L4 6.5M0 9 L5 8M6 2 L10 2 L6 10M6 4.5 L10 10" fill="none" stroke="currentColor" vector-effect="non-scaling-stroke" stroke-linecap="round" stroke-linejoin="round"/></symbol><symbol id="u8a2d" viewBox="-1 -1.2 12 12.4" preserveAspectRatio="none"><path d="M0 1 L4 1M0.5 3 L3.5 3M0.5 5 L3.5 5M0.5 7 L3.5 7 L3.5 10 L0.5 10 L0.5 7M6 0 L6 3 L5 4M6 0 L9 0 L9 3 L10 4M5 6 L9 6 L5 10M6 7 L10 10" fill="none" stroke="currentColor" vector-effect="non-scaling-stroke" stroke-linecap="round" stroke-linejoin="round"/></symbol><symbol id="u5b9a" viewBox="-1 -1.2 12 12.4" preserveAspectRatio="none"><path d="M5 0 L5 1M1 3 L1 1 L9 1 L9 3M2 4 L8 4M5 4 L5 9M5 6.5 L8 6.5M3 6 L2 9 L10 10" fill="none" stroke="currentColor" vector-effect="non-scaling-stroke" stroke-linecap="round" stroke-linejoin="round"/></symbol><symbol id="u7ba1" viewBox="-1 -1.2 12 12.4" preserveAspectRatio="none"><path d="M1 0 L0 2M1 1 L4 1M6 0 L5 2M6 1 L10 1M1 4.5 L1 3 L9 3 L9 4.5M2 5 L8 5 L8 7 L2 7M2 5 L2 10M2 8 L8 8 L8 10 L2 10" fill="none" stroke="currentColor" vector-effect="non-scaling-stroke" stroke-linecap="round" stroke-linejoin="round"/></symbol><symbol id="u7406" viewBox="-1 -1.2 12 12.4" preserveAspectRatio="none"><path d="M0 1 L4 1M0 5 L4 5M0 9 L4 8M2 1 L2 8.5M5 1 L10 1 L10 5 L5 5 L5 1M5 3 L10 3M7.5 1 L7.5 9.5M5 7 L10 7M4.5 9.5 L10 9.5" fill="none" stroke="currentColor" vector-effect="non-scaling-stroke" stroke-linecap="round" stroke-linejoin="round"/></symbol><symbol id="u539f" viewBox="-1 -1.2 12 12.4" preserveAspectRatio="none"><path d="M1 1 L10 1M1 1 L1 6 L0 10M3 3 L9 3 L9 6.5 L3 6.5 L3 3M3 5 L9 5M6 2 L5.5 3M6 6.5 L6 10M4 8 L3 9M8 8 L9 9" fill="none" stroke="currentColor" vector-effect="non-scaling-stroke" stroke-linecap="round" stroke-linejoin="round"/></symbol><symbol id="u70b9" viewBox="-1 -1.2 12 12.4" preserveAspectRatio="none"><path d="M5 0 L5 4M5 2 L9 2M2 4 L8 4 L8 7 L2 7 L2 4M1 9 L0 10M3.5 9 L3.5 10M6 9 L6.5 10M9 9 L10 10" fill="none" stroke="currentColor" vector-effect="non-scaling-stroke" stroke-linecap="round" stroke-linejoin="round"/></symbol><symbol id="u4f5c" viewBox="-1 -1.2 12 12.4" preserveAspectRatio="none"><path d="M3 0 L0 5M2 3 L2 10M5 0 L4 3M4 2 L10 2M5 2 L5 10M5 5 L9 5M5 7.5 L9 7.5" fill="none" stroke="currentColor" vector-effect="non-scaling-stroke" stroke-linecap="round" stroke-linejoin="round"/></symbol><symbol id="u6210" viewBox="-1 -1.2 12 12.4" preserveAspectRatio="none"><path d="M1 2 L10 2M1 2 L1 7 L0 10M2 5 L5 5 L5 9 L4 9M7 0 L8 6 L10 10M10 4 L6 9M8 0 L9 1" fill="none" stroke="currentColor" vector-effect="non-scaling-stroke" stroke-linecap="round" stroke-linejoin="round"/></symbol><symbol id="u4fee" viewBox="-1 -1.2 12 12.4" preserveAspectRatio="none"><path d="M3 0 L0 5M2 3 L2 10M4 3 L4 8M6 0 L5 2M6 1 L9 1 L6 4M6 2 L10 4M9 5 L6 7M10 6.5 L6 9M10 8 L5 10" fill="none" stroke="currentColor" vector-effect="non-scaling-stroke" stroke-linecap="round" stroke-linejoin="round"/></symbol><symbol id="u6b63" viewBox="-1 -1.2 12 12.4" preserveAspectRatio="none"><path d="M1 1 L9 1M5 1 L5 9.5M5 5 L8 5M2 4 L2 9.5M0 9.5 L10 9.5" fill="none" stroke="currentColor" vector-effect="non-scaling-stroke" stroke-linecap="round" stroke-linejoin="round"/></symbol><symbol id="u69cb" viewBox="-1 -1.2 12 12.4" preserveAspectRatio="none"><path d="M0 3 L4 3M2 0 L2 10M2 4 L0 8M2 4 L4 7M5 1.5 L10 1.5M6 0 L6 4M9 0 L9 4M5 4 L10 4M5.5 6 L9.5 6 L9.5 10 L8.5 9.5M5.5 6 L5.5 10M5 8 L10 8M7.5 4 L7.5 10" fill="none" stroke="currentColor" vector-effect="non-scaling-stroke" stroke-linecap="round" stroke-linejoin="round"/></symbol><symbol id="u7bc9" viewBox="-1 -1.2 12 12.4" preserveAspectRatio="none"><path d="M1 0 L0 2M1 1 L4 1M6 0 L5 2M6 1 L10 1M1 3.5 L4 3.5M2.5 3.5 L2.5 6M0.5 6 L4.5 5.5M6 3.5 L6 6 L5 6.5M6 3.5 L9 3.5 L9 6 L10 6M1 7.5 L9 7.5M5 6.5 L5 10M5 8 L1 10M5 8 L9 10" fill="none" stroke="currentColor" vector-effect="non-scaling-stroke" stroke-linecap="round" stroke-linejoin="round"/></symbol><symbol id="u691c" viewBox="-1 -1.2 12 12.4" preserveAspectRatio="none"><path d="M0 3 L4 3M2 0 L2 10M2 4 L0 8M2 4 L4 7M7.5 0 L5 3M7.5 0 L10 3M6 3.5 L9 3.5M5.5 5 L9.5 5 L9.5 7 L5.5 7 L5.5 5M7.5 5 L7.5 8M7.5 8 L5 10M7.5 8 L10 10" fill="none" stroke="currentColor" vector-effect="non-scaling-stroke" stroke-linecap="round" stroke-linejoin="round"/></symbol><symbol id="u67fb" viewBox="-1 -1.2 12 12.4" preserveAspectRatio="none"><path d="M1 2 L9 2M5 0 L5 5M5 2 L1 5M5 2 L9 5M2.5 5 L7.5 5 L7.5 9 L2.5 9 L2.5 5M2.5 7 L7.5 7M0 9.7 L10 9.7" fill="none" stroke="currentColor" vector-effect="non-scaling-stroke" stroke-linecap="round" stroke-linejoin="round"/></symbol><symbol id="u633f" viewBox="-1 -1.2 12 12.4" preserveAspectRatio="none"><path d="M0 3 L4 3M2 0 L2 10 L1 9.3M0 7.5 L4 5.5M5 1 L10 0.5M7.5 0 L7.5 10M5 3 L10 3M5.5 4.5 L9.5 4.5 L9.5 9 L5.5 9 L5.5 4.5M5.5 7 L9.5 7" fill="none" stroke="currentColor" vector-effect="non-scaling-stroke" stroke-linecap="round" stroke-linejoin="round"/></symbol><symbol id="u5165" viewBox="-1 -1.2 12 12.4" preserveAspectRatio="none"><path d="M3 1 L5 2 L1 10M5 3 L10 10" fill="none" stroke="currentColor" vector-effect="non-scaling-stroke" stroke-linecap="round" stroke-linejoin="round"/></symbol><symbol id="u9078" viewBox="-1 -1.2 12 12.4" preserveAspectRatio="none"><path d="M1 1 L1.5 2M0 4 L2 4 L2 8 L0 10 L10 10M3 1 L5 1 L5 2.5 L3 2.5 L3 4 L5.5 4M6.5 1 L9 1 L9 2.5 L6.5 2.5 L6.5 4 L9.5 4M3 6 L10 6M4.5 5 L4.5 8M8 5 L8 8M3 8 L10 8M5 8.5 L4 9.5M8 8.5 L9 9.5" fill="none" stroke="currentColor" vector-effect="non-scaling-stroke" stroke-linecap="round" stroke-linejoin="round"/></symbol><symbol id="u629e" viewBox="-1 -1.2 12 12.4" preserveAspectRatio="none"><path d="M0 3 L4 3M2 0 L2 10 L1 9.3M0 7.5 L4 5.5M5 1 L10 1 L10 4 L5 4M5 1 L5 6 L4 10M6.5 4 L10 10" fill="none" stroke="currentColor" vector-effect="non-scaling-stroke" stroke-linecap="round" stroke-linejoin="round"/></symbol><symbol id="u500b" viewBox="-1 -1.2 12 12.4" preserveAspectRatio="none"><path d="M3 0 L0 5M2 3 L2 10M4 0.5 L10 0.5 L10 10 L4 10 L4 0.5M5.5 3 L8.5 3M7 1.5 L7 5M5.5 5.5 L8.5 5.5 L8.5 8 L5.5 8 L5.5 5.5" fill="none" stroke="currentColor" vector-effect="non-scaling-stroke" stroke-linecap="round" stroke-linejoin="round"/></symbol><symbol id="u4eba" viewBox="-1 -1.2 12 12.4" preserveAspectRatio="none"><path d="M5 0 L5 3 L0 10M5 3 L10 10" fill="none" stroke="currentColor" vector-effect="non-scaling-stroke" stroke-linecap="round" stroke-linejoin="round"/></symbol><symbol id="u7528" viewBox="-1 -1.2 12 12.4" preserveAspectRatio="none"><path d="M1 1 L1 7 L0 10M1 1 L9 1 L9 10 L8 9.5M1 4 L9 4M1 7 L9 7M5 1 L5 10" fill="none" stroke="currentColor" vector-effect="non-scaling-stroke" stroke-linecap="round" stroke-linejoin="round"/></symbol><symbol id="u5546" viewBox="-1 -1.2 12 12.4" preserveAspectRatio="none"><path d="M5 0 L5 1M0 1.5 L10 1.5M3 2 L3.5 3M7 2 L6.5 3M1 3.5 L9 3.5 L9 10 L8.5 9.5M1 3.5 L1 10M3 5 L4 6M7 5 L6 6M3.5 7 L6.5 7 L6.5 9 L3.5 9 L3.5 7" fill="none" stroke="currentColor" vector-effect="non-scaling-stroke" stroke-linecap="round" stroke-linejoin="round"/></symbol><symbol id="u5229" viewBox="-1 -1.2 12 12.4" preserveAspectRatio="none"><path d="M4 0 L1 1.5M0 3 L5 3M2.5 1 L2.5 10M2.5 4 L0 8M2.5 4 L5 6M7 2 L7 7M9.5 0 L9.5 10 L8.5 9" fill="none" stroke="currentColor" vector-effect="non-scaling-stroke" stroke-linecap="round" stroke-linejoin="round"/></symbol><symbol id="u4e0d" viewBox="-1 -1.2 12 12.4" preserveAspectRatio="none"><path d="M0 1 L10 1M6 1 L0 8M5 4 L5 10M6 5 L9 8" fill="none" stroke="currentColor" vector-effect="non-scaling-stroke" stroke-linecap="round" stroke-linejoin="round"/></symbol><symbol id="u53ef" viewBox="-1 -1.2 12 12.4" preserveAspectRatio="none"><path d="M0 1 L10 1M1.5 3.5 L5.5 3.5 L5.5 7 L1.5 7 L1.5 3.5M8 1 L8 10 L6.5 9" fill="none" stroke="currentColor" vector-effect="non-scaling-stroke" stroke-linecap="round" stroke-linejoin="round"/></symbol></defs></svg><!-- top black strip -->
<div class="abs" style="left:0;top:0;width:1920px;height:8px;background:#000"></div>
<div class="abs" style="left:1920px;top:26px;width:8px;height:977px;background:#f7f7f7"></div>
<div class="abs" style="left:1920px;top:1002px;width:8px;height:2px;background:#d6d6d6"></div>
<!-- title bar -->
<div class="abs" style="left:0;top:8px;width:1920px;height:23px;background:#fff"></div>
<svg class="abs" style="left:2px;top:11px" width="16" height="16" viewBox="0 0 16 16"><rect width="16" height="16" fill="#f9e6d4"/><path d="M5 3.5h7v2.5H8v2h3.5v2.3H8V13H5z" fill="#d8761f"/><rect x="10" y="13" width="4" height="1.5" fill="#e9a060"/></svg>
<div class="t tt" style="left:23px;top:13.5px;font-size:13px;line-height:14px;color:#000"><span style="display:inline-block;transform:scaleX(.88);transform-origin:0 0;width:108px">Autodesk Fusion 360</span> (<svg class="g j"><use href="#u500b"/></svg><svg class="g j"><use href="#u4eba"/></svg><svg class="g j"><use href="#u7528"/></svg> - <svg class="g j"><use href="#u5546"/></svg><svg class="g j"><use href="#u7528"/></svg><svg class="g j"><use href="#u5229"/></svg><svg class="g j"><use href="#u7528"/></svg><svg class="g j"><use href="#u4e0d"/></svg><svg class="g j"><use href="#u53ef"/></svg>)</div>
<svg class="abs" style="left:1790px;top:10px" width="120" height="18" viewBox="0 0 120 18">
<path d="M8 8.5h11" stroke="#000" stroke-width="1.1"/>
<path d="M52.5 5.5h8v8h-8z M55 5.5V3h8v8h-2.5" stroke="#000" stroke-width="1.1" fill="none"/>
<path d="M98 2l10 10M108 2l-10 10" stroke="#000" stroke-width="1.1"/>
</svg>
<!-- tool bar -->
<div class="abs" style="left:0;top:31px;width:1920px;height:32px;background:#cacaca"></div>
<svg class="abs" style="left:0;top:31px" width="200" height="32" viewBox="0 0 200 32">
<g fill="#555"><rect x="9" y="9" width="4" height="4" rx=".6"/><rect x="14" y="9" width="4" height="4" rx=".6"/><rect x="19" y="9" width="4" height="4" rx=".6"/><rect x="9" y="14" width="4" height="4" rx=".6"/><rect x="14" y="14" width="4" height="4" rx=".6"/><rect x="19" y="14" width="4" height="4" rx=".6"/><rect x="9" y="19" width="4" height="4" rx=".6"/><rect x="14" y="19" width="4" height="4" rx=".6"/><rect x="19" y="19" width="4" height="4" rx=".6"/></g>
<path d="M42 8h8l5 5v11h-13z" fill="#666"/><path d="M61 13h7l-3.5 4z" fill="#666"/>
<path d="M87 9h12l2 2v12h-14z" fill="#8d8d8d"/><rect x="90" y="10" width="8" height="5" fill="#c8c8c8"/><rect x="91" y="18" width="7" height="5" fill="#c8c8c8"/>
<path d="M122 16a7 7 0 0 1 11 0v5" stroke="#8d8d8d" stroke-width="2" fill="none"/><path d="M120 16l5-5v8z" fill="#8d8d8d"/><path d="M140 13h7l-3.5 4z" fill="#8d8d8d"/>
<path d="M172 16a7 7 0 0 0-11 0v5" stroke="#8d8d8d" stroke-width="2" fill="none"/><path d="M174 16l-5-5v8z" fill="#8d8d8d"/><path d="M180 13h7l-3.5 4z" fill="#8d8d8d"/>
</svg>
<!-- tabs -->
<div class="abs" style="left:193px;top:35px;width:737px;height:28px;background:#b9b9b9;border-radius:4px 4px 0 0"></div>
<svg class="abs" style="left:503px;top:40px" width="18" height="17" viewBox="0 0 18 17"><path d="M2 4l7-3 7 3v8l-7 4-7-4z" fill="#9a9a9a"/><path d="M2 4l7 3 7-3" stroke="#d0d0d0" stroke-width="1" fill="none"/><path d="M9 7v9" stroke="#d0d0d0"/><path d="M9 7l7-3v8l-7 4z" fill="#858585"/></svg>
<div class="t" style="left:523px;top:43px;font-size:12.5px;line-height:14px;color:#6a6a6a">Gtune_open v2</div>
<svg class="abs" style="left:912px;top:42px" width="12" height="12"><path d="M1.5 1.5l8 8M9.5 1.5l-8 8" stroke="#777" stroke-width="1.3"/></svg>
<div class="abs" style="left:932px;top:35px;width:738px;height:28px;background:#f0f0f0;border-radius:4px 4px 0 0"></div>
<svg class="abs" style="left:1258px;top:40px" width="18" height="17" viewBox="0 0 18 17"><path d="M2 4l7-3 7 3v8l-7 4-7-4z" fill="#8c8c8c"/><path d="M2 4l7 3v9l-7-4z" fill="#b5b5b5"/><path d="M9 7l7-3v8l-7 4z" fill="#6e6e6e"/></svg>
<div class="t" style="left:1278px;top:43px;font-size:12.5px;line-height:14px;color:#333">Gtune v49</div>
<svg class="abs" style="left:1653px;top:42px" width="12" height="12"><path d="M1.5 1.5l8 8M9.5 1.5l-8 8" stroke="#555" stroke-width="1.3"/></svg>
<div class="abs" style="left:1675px;top:35px;width:28px;height:28px;background:#b9b9b9;border-radius:3px 3px 0 0"></div>
<svg class="abs" style="left:1675px;top:35px" width="28" height="28"><path d="M8 13.5h12M14 7.5v12" stroke="#6a6a6a" stroke-width="2.6"/></svg>
<svg class="abs" style="left:1714px;top:38px" width="20" height="20" viewBox="0 0 20 20"><path d="M1 2h8l4 4v3l-7 7v3H1z" fill="#666"/><path d="M8 17l9-9 2 2-9 9H8z" fill="#666"/></svg>
<div class="t" style="left:1734px;top:41px;font-size:12px;line-height:14px;color:#444">7/10</div>
<svg class="abs" style="left:1777px;top:37px" width="100" height="22" viewBox="0 0 100 22">
<circle cx="11" cy="10" r="7.3" fill="none" stroke="#666" stroke-width="1.6"/><circle cx="11" cy="10" r="5.3" fill="#c8c8c8"/><path d="M11 6v4.5h4" stroke="#666" stroke-width="1.6" fill="none"/>
<path d="M38 15h12l-1.5-2v-4a4.5 4.5 0 0 0-9 0v4z" fill="#666"/><circle cx="44" cy="17" r="1.8" fill="#666"/><rect x="43" y="2" width="2" height="3" fill="#666"/>
<circle cx="77" cy="10" r="8" fill="#666"/><path d="M74 7.5a3 3 0 1 1 4.2 2.7c-1 .5-1.2 1-1.2 2" stroke="#c8c8c8" stroke-width="1.9" fill="none"/><circle cx="77" cy="15" r="1.2" fill="#c8c8c8"/>
</svg>
<div class="abs" style="left:1882px;top:35px;width:25px;height:25px;border-radius:50%;background:#eeeeee"></div>
<div class="t" style="left:1886px;top:41px;font-size:12.5px;line-height:14px;color:#333">GC</div>
<!-- ribbon -->
<div class="abs" style="left:0;top:63px;width:1920px;height:82px;background:#f1f1f1;border-bottom:1px solid #d9d9d9"></div>
<div class="abs" style="left:12px;top:73px;width:110px;height:61px;border:1px solid #d3d3d3;border-radius:4px;background:#f2f2f2"></div>
<div class="t bd" style="left:41px;top:97px;font-size:11px;font-weight:bold;color:#222"><svg class="g n"><use href="#u30c7"/></svg><svg class="g n"><use href="#u30b6"/></svg><svg class="g n"><use href="#u30a4"/></svg><svg class="g n"><use href="#u30f3"/></svg><i class="dd"></i></div>
<div class="t bd" style="left:150px;top:68px;font-size:10.5px;font-weight:bold;color:#0a8fd0"><svg class="g n"><use href="#u30bd"/></svg><svg class="g n"><use href="#u30ea"/></svg><svg class="g n"><use href="#u30c3"/></svg><svg class="g n"><use href="#u30c9"/></svg></div>
<div class="abs" style="left:138px;top:84px;width:57px;height:3px;background:#0696d7;border-radius:1px"></div>
<div class="t" style="left:227px;top:68px;font-size:10.5px"><svg class="g n"><use href="#u30b5"/></svg><svg class="g n"><use href="#u30fc"/></svg><svg class="g n"><use href="#u30d5"/></svg><svg class="g n"><use href="#u30a7"/></svg><svg class="g n"><use href="#u30b9"/></svg></div>
<div class="t" style="left:315px;top:68px;font-size:10.5px"><svg class="g n"><use href="#u30e1"/></svg><svg class="g n"><use href="#u30c3"/></svg><svg class="g n"><use href="#u30b7"/></svg><svg class="g n"><use href="#u30e5"/></svg></div>
<div class="t" style="left:388px;top:68px;font-size:10.5px"><svg class="g n"><use href="#u30d5"/></svg><svg class="g n"><use href="#u30a9"/></svg><svg class="g n"><use href="#u30fc"/></svg><svg class="g n"><use href="#u30e0"/></svg></div>
<div class="t" style="left:466px;top:68px;font-size:10.5px"><svg class="g n"><use href="#u30b7"/></svg><svg class="g n"><use href="#u30fc"/></svg><svg class="g n"><use href="#u30c8"/></svg> <svg class="g n"><use href="#u30e1"/></svg><svg class="g n"><use href="#u30bf"/></svg><svg class="g n"><use href="#u30eb"/></svg></div>
<div class="t" style="left:565px;top:68px;font-size:10.5px"><svg class="g n"><use href="#u30c4"/></svg><svg class="g n"><use href="#u30fc"/></svg><svg class="g n"><use href="#u30eb"/></svg></div>
<!-- ribbon labels -->
<div class="t" style="left:220px;top:129px;font-size:10.5px;color:#333"><svg class="g j"><use href="#u4f5c"/></svg><svg class="g j"><use href="#u6210"/></svg><i class="dd"></i></div>
<div class="t" style="left:467px;top:129px;font-size:10.5px;color:#333"><svg class="g j"><use href="#u4fee"/></svg><svg class="g j"><use href="#u6b63"/></svg><i class="dd"></i></div>
<div class="t" style="left:642px;top:129px;font-size:10.5px;color:#333"><svg class="g n"><use href="#u30a2"/></svg><svg class="g n"><use href="#u30bb"/></svg><svg class="g n"><use href="#u30f3"/></svg><svg class="g n"><use href="#u30d6"/></svg><svg class="g n"><use href="#u30ea"/></svg><i class="dd"></i></div>
<div class="t" style="left:730px;top:129px;font-size:10.5px;color:#333"><svg class="g j"><use href="#u69cb"/></svg><svg class="g j"><use href="#u7bc9"/></svg><i class="dd"></i></div>
<div class="t" style="left:789px;top:129px;font-size:10.5px;color:#333"><svg class="g j"><use href="#u691c"/></svg><svg class="g j"><use href="#u67fb"/></svg><i class="dd"></i></div>
<div class="t" style="left:849px;top:129px;font-size:10.5px;color:#333"><svg class="g j"><use href="#u633f"/></svg><svg class="g j"><use href="#u5165"/></svg><i class="dd"></i></div>
<div class="t" style="left:907px;top:129px;font-size:10.5px;color:#333"><svg class="g j"><use href="#u9078"/></svg><svg class="g j"><use href="#u629e"/></svg><i class="dd"></i></div>
<svg class="abs" style="left:130px;top:84px" width="830" height="58" viewBox="130 84 830 58">
<g stroke="#d8d8d8" stroke-width="1.5"><path d="M351 90V140M620 90V140M717 90V140M776 90V140M835 90V140M893 90V140"/></g>
<!-- sketch -->
<g stroke="#333" stroke-width="1" fill="none"><path d="M139 91h26v26M139 91v29h15" stroke-dasharray="none"/><path d="M145 98h13M145 98v12M149 111q9-3 10-13"/></g>
<g fill="#333"><rect x="137" y="89" width="3" height="3"/><rect x="164" y="89" width="3" height="3"/><rect x="137" y="118" width="3" height="3"/><rect x="144" y="97" width="3" height="3"/><rect x="156" y="97" width="3" height="3"/><rect x="144" y="110" width="3" height="3"/></g>
<path d="M160 108v14M153 115h14" stroke="#1fa23a" stroke-width="3.4"/>
<!-- extrude -->
<path d="M181 117.8h18v4h-18z" fill="#c6c6c6"/><path d="M199 117.8l5.6-4.3v4l-5.6 4.3z" fill="#adadad"/>
<path d="M181 97h18v19.5h-18z" fill="#6aaee3"/><path d="M181 97l6-7h17.6l-5.6 7z" fill="#9ccff5"/><path d="M199 97l5.6-7v22l-5.6 4.5z" fill="#3e8fd0"/>
<path d="M208.5 118V93M206 96l2.5-4 2.5 4" stroke="#222" stroke-width="1.3" fill="none"/>
<!-- revolve -->
<path d="M223 104q16-10 33 0v12q-17-10-33 0z" fill="#6aaee3"/><path d="M223 104q16-10 33 0l-4 4q-12-7-25 0z" fill="#9ccff5"/><path d="M252 104l4-3v15l-4 3z" fill="#fff" stroke="#333" stroke-width=".9"/>
<path d="M226 97q14-10 27-1" stroke="#333" stroke-width="1" fill="none"/><path d="M224 97l4-3v5z" fill="#333"/>
<!-- hole -->
<path d="M266 96l5-6h26v26l-5 6h-26z" fill="#d5d5d5" stroke="#555" stroke-width="1"/><path d="M266 96h26l5-6M292 96v26" stroke="#555" stroke-width="1" fill="none"/><path d="M292 96l5-6v26l-5 6z" fill="#bdbdbd" stroke="#555" stroke-width="1"/><circle cx="278" cy="109" r="8.5" fill="#f0f0f0" stroke="#555"/><path d="M271 109a7 7 0 0 0 13 3a6 6 0 0 1-7-10a7 7 0 0 0-6 7z" fill="#4f9fe0"/>
<!-- pattern -->
<rect x="309" y="92" width="6" height="6" fill="#fff" stroke="#444"/><rect x="331" y="92" width="6" height="6" fill="#4f9fe0"/><rect x="309" y="114" width="6" height="6" fill="#4f9fe0"/><rect x="331" y="114" width="6" height="6" fill="#4f9fe0"/><path d="M316 95h14M312 99v14M316 117h14" stroke="#444"/>
<!-- press pull -->
<path d="M364.5 97l5-6.5h3V122h-8z" fill="#e2e2e2" stroke="#555" stroke-width=".9"/>
<path d="M371 97h10v25h-10z" fill="#6aaee3"/><path d="M371 97l5-7h10l-5 7z" fill="#9ccff5"/><path d="M381 97l5-7v25l-5 7z" fill="#3e8fd0"/>
<path d="M383 105.5h7" stroke="#222" stroke-width="1.3"/><path d="M389 102.5l4 3-4 3z" fill="#222"/>
<!-- fillet -->
<path d="M406 98l8-8h8q9 3 9 16v16h-25z" fill="#dcdcdc" stroke="#555" stroke-width=".9"/>
<path d="M430.5 106.5l7-1.5v10l-7 7z" fill="#c4c4c4" stroke="#555" stroke-width=".9"/>
<path d="M419.5 92.5q15 2 18 12.5l-7 2q-2-8-10-10.5z" fill="#62a9e2"/>
<!-- shell -->
<path d="M449 98h24v24h-24z" fill="#dcdcdc" stroke="#555" stroke-width=".9"/><path d="M449 98l7.5-8h24.5l-8 8z" fill="#e6e6e6" stroke="#555" stroke-width=".9"/><path d="M473 98l8-8v24l-8 8z" fill="#c4c4c4" stroke="#555" stroke-width=".9"/>
<rect x="452" y="100.5" width="18.5" height="18.5" fill="#eeeeee"/><path d="M453.3 102h7.5v8.2h8.2v7.5h-15.7z" fill="#8fc8f2"/><path d="M453.3 102h7.5v8.2l-7.5 7.5z" fill="#3e8fd0"/>
<!-- combine -->
<path d="M502 97h15v14.5h-15z" fill="#6aaee3"/><path d="M502 97l5-7h17l-7 7z" fill="#9ccff5"/><path d="M517 97l7-7v14.5l-7 7z" fill="#3e8fd0"/>
<path d="M492 107h15v15h-15z" fill="#6aaee3"/><path d="M492 107l5-6.5h17l-7 6.5z" fill="#9ccff5"/><path d="M507 107l7-6.5v14.5l-7 7z" fill="#3e8fd0"/><path d="M502 100.5h12v10.5h-7v-4h-5z" fill="#6aaee3"/>
<!-- split -->
<path d="M537 108h22v13h-22z" fill="#dcdcdc" stroke="#555" stroke-width=".9"/><path d="M559 108l5.5-6v13l-5.5 6z" fill="#c4c4c4" stroke="#555" stroke-width=".9"/>
<path d="M537 97h22v8h-22z" fill="#6aaee3"/><path d="M537 97l5-7h22.5l-5.5 7z" fill="#9ccff5"/><path d="M559 97l5.5-7v8l-5.5 7z" fill="#3e8fd0"/>
<path d="M535 108.5h24l7.5-8" stroke="#2f95e8" stroke-width="1.4" fill="none"/>
<!-- move -->
<path d="M594 91v30M579 106h30" stroke="#222" stroke-width="2.2"/><path d="M594 90l-5 6h10zM594 122l-5-6h10zM578 106l6-5v10zM610 106l-6-5v10z" fill="#222"/>
<!-- assembly new comp -->
<path d="M632 110h12v12h-12zM645 110h12v12h-12z" fill="#dcdcdc" stroke="#555" stroke-width=".9"/><path d="M632 99l4-4h10v14h-14z" fill="#6aaee3"/><path d="M652 90l2 5 4-3-1 5 5 1-4 3 3 4-5-1-1 5-3-4-3 3 0-5-5-1 4-3-2-4 5 1z" fill="#f5a623"/>
<!-- joint -->
<path d="M677 97q3-5 8-4v26l-7 1z" fill="#dcdcdc" stroke="#555" stroke-width=".9"/><path d="M694 97l10 5v20l-10-5z" fill="#dcdcdc" stroke="#555" stroke-width=".9"/><path d="M683 104v10M696 102v6" stroke="#4f9fe0" stroke-width="1.2"/>
<!-- construct plane -->
<path d="M732 98l6-8v32l-6-6z" fill="#e0e0e0" stroke="#555" stroke-width=".9"/><path d="M738 98l9-8v24l-9 8z" fill="#5bbd72"/><path d="M750 100l10-8v20l-10 8z" fill="#e6955e"/>
<!-- measure -->
<path d="M792 98v8M820 98v8M792 102h28" stroke="#444" stroke-width="1"/><rect x="792" y="107" width="28" height="6" fill="#f5a623"/><path d="M795 107v2M799 107v2M803 107v2M807 107v2M811 107v2M815 107v2" stroke="#9a6000"/>
<!-- insert image -->
<rect x="850" y="91" width="29" height="29" fill="#4f9fe0"/><path d="M850 120v-10q7-8 13-2q6-6 16 3v9z" fill="#2b7fc4"/><circle cx="871" cy="99" r="2.8" fill="#ffe9a8"/><path d="M850 112q7-8 13-2" stroke="#7fc1f0" fill="none"/>
<!-- select -->
<rect x="905" y="87" width="38" height="38" fill="#0b96d6"/><rect x="909" y="91" width="27" height="21" fill="none" stroke="#7de07d" stroke-width="1" stroke-dasharray="3 2"/><path d="M929 104l0 15 3-3 3 5 2-1-3-5 4 0z" fill="#fff"/>
</svg>
<!-- browser panel -->
<div class="abs" style="left:4px;top:149px;width:300px;height:25px;background:#f2f2f2;border:1px solid #cfcfcf"></div>
<svg class="abs" style="left:8px;top:157px" width="14" height="10"><path d="M1 5l5-4v8zM6 5l5-4v8z" fill="#333"/></svg>
<div class="t" style="left:28px;top:155px;font-size:10.5px;color:#555"><svg class="g n"><use href="#u30d6"/></svg><svg class="g n"><use href="#u30e9"/></svg><svg class="g n"><use href="#u30a6"/></svg><svg class="g n"><use href="#u30b6"/></svg></div>
<svg class="abs" style="left:280px;top:153px" width="24" height="17"><circle cx="7.5" cy="8.5" r="4.6" fill="#2a2a2a"/><path d="M5 8.5h5" stroke="#fff" stroke-width="1.4"/><path d="M19.5 3v11M21.5 5v6" stroke="#777" stroke-width="1"/></svg>
<div class="abs" style="left:8px;top:179px;width:6px;height:820px;background:#c9c9c9"></div>
<div class="abs" style="left:8px;top:179px;width:6px;height:232px;background:#a3a3a3;border-radius:3px"></div>
<div class="abs" style="left:40px;top:178px;width:148px;height:22px;background:#f0f0f0"></div>
<div class="abs" style="left:65px;top:181px;width:98px;height:16px;background:#999999"></div>
<div class="t" style="left:98px;top:183px;font-size:12px;line-height:13px;font-weight:bold;color:#fff">Gtune v49</div>
<div class="abs" style="left:58px;top:203px;width:122px;height:20px;background:#f0f0f0"></div>
<div class="t" style="left:91px;top:206px;font-size:11px;line-height:12px;color:#2a2a2a;"><svg class="g n"><use href="#u30c9"/></svg><svg class="g n"><use href="#u30ad"/></svg><svg class="g n"><use href="#u30e5"/></svg><svg class="g n"><use href="#u30e1"/></svg><svg class="g n"><use href="#u30f3"/></svg><svg class="g n"><use href="#u30c8"/></svg><svg class="g n"><use href="#u306e"/></svg><svg class="g j"><use href="#u8a2d"/></svg><svg class="g j"><use href="#u5b9a"/></svg></div>
<div class="abs" style="left:58px;top:227px;width:90px;height:20px;background:#f0f0f0"></div>
<div class="t" style="left:90px;top:230px;font-size:11px;line-height:12px;color:#2a2a2a;"><svg class="g n"><use href="#u30d3"/></svg><svg class="g n"><use href="#u30e5"/></svg><svg class="g n"><use href="#u30fc"/></svg><svg class="g j"><use href="#u7ba1"/></svg><svg class="g j"><use href="#u7406"/></svg></div>
<div class="abs" style="left:58px;top:251px;width:90px;height:20px;background:#f0f0f0"></div>
<div class="t" style="left:115px;top:254px;font-size:11px;line-height:12px;color:#2a2a2a;"><svg class="g j"><use href="#u539f"/></svg><svg class="g j"><use href="#u70b9"/></svg></div>
<div class="abs" style="left:58px;top:275px;width:90px;height:20px;background:#f0f0f0"></div>
<div class="t" style="left:115px;top:278px;font-size:11px;line-height:12px;color:#2a2a2a;"><svg class="g n"><use href="#u30dc"/></svg><svg class="g n"><use href="#u30c7"/></svg><svg class="g n"><use href="#u30a3"/></svg></div>
<div class="abs" style="left:58px;top:299px;width:139px;height:20px;background:#f0f0f0"></div>
<div class="t" style="left:115px;top:302px;font-size:11px;line-height:12px;color:#2a2a2a;"><svg class="g n"><use href="#u30b3"/></svg><svg class="g n"><use href="#u30f3"/></svg><svg class="g n"><use href="#u30b9"/></svg><svg class="g n"><use href="#u30c8"/></svg><svg class="g n"><use href="#u30e9"/></svg><svg class="g n"><use href="#u30af"/></svg><svg class="g n"><use href="#u30b7"/></svg><svg class="g n"><use href="#u30e7"/></svg><svg class="g n"><use href="#u30f3"/></svg></div>
<div class="abs" style="left:58px;top:323px;width:94px;height:20px;background:#f0f0f0"></div>
<div class="t" style="left:90px;top:326px;font-size:11px;line-height:12px;color:#2a2a2a;"><svg class="g j"><use href="#u62bc"/></svg><svg class="g n"><use href="#u3057"/></svg><svg class="g j"><use href="#u51fa"/></svg><svg class="g n"><use href="#u3057"/></svg>20</div>
<div class="abs" style="left:58px;top:347px;width:94px;height:20px;background:#f0f0f0"></div>
<div class="t" style="left:90px;top:350px;font-size:11px;line-height:12px;color:#2a2a2a;"><svg class="g j"><use href="#u62bc"/></svg><svg class="g n"><use href="#u3057"/></svg><svg class="g j"><use href="#u51fa"/></svg><svg class="g n"><use href="#u3057"/></svg>21</div>
<div class="abs" style="left:58px;top:371px;width:98px;height:20px;background:#f0f0f0"></div>
<div class="t" style="left:90px;top:374px;font-size:11px;line-height:12px;color:#2a2a2a;"><svg class="g j"><use href="#u62bc"/></svg><svg class="g n"><use href="#u3057"/></svg><svg class="g j"><use href="#u51fa"/></svg><svg class="g n"><use href="#u3057"/></svg>116</div>
<div class="abs" style="left:58px;top:395px;width:90px;height:20px;background:#f0f0f0"></div>
<div class="t" style="left:90px;top:398px;font-size:11px;line-height:12px;color:#2a2a2a;"><svg class="g j"><use href="#u9762"/></svg><svg class="g j"><use href="#u53d6"/></svg><svg class="g n"><use href="#u308a"/></svg>117</div>
<div class="abs" style="left:58px;top:419px;width:98px;height:20px;background:#f0f0f0"></div>
<div class="t" style="left:90px;top:422px;font-size:11px;line-height:12px;color:#2a2a2a;"><svg class="g j"><use href="#u62bc"/></svg><svg class="g n"><use href="#u3057"/></svg><svg class="g j"><use href="#u51fa"/></svg><svg class="g n"><use href="#u3057"/></svg>118</div>
<div class="abs" style="left:58px;top:443px;width:98px;height:20px;background:#f0f0f0"></div>
<div class="t" style="left:90px;top:446px;font-size:11px;line-height:12px;color:#2a2a2a;"><svg class="g j"><use href="#u62bc"/></svg><svg class="g n"><use href="#u3057"/></svg><svg class="g j"><use href="#u51fa"/></svg><svg class="g n"><use href="#u3057"/></svg>119</div>
<div class="abs" style="left:58px;top:467px;width:98px;height:20px;background:#f0f0f0"></div>
<div class="t" style="left:90px;top:470px;font-size:11px;line-height:12px;color:#2a2a2a;"><svg class="g j"><use href="#u62bc"/></svg><svg class="g n"><use href="#u3057"/></svg><svg class="g j"><use href="#u51fa"/></svg><svg class="g n"><use href="#u3057"/></svg>130</div>
<div class="abs" style="left:58px;top:491px;width:80px;height:20px;background:#f0f0f0"></div>
<div class="t" style="left:90px;top:494px;font-size:11px;line-height:12px;color:#2a2a2a;"><svg class="g j"><use href="#u52fe"/></svg><svg class="g j"><use href="#u914d"/></svg>133</div>
<div class="abs" style="left:58px;top:515px;width:80px;height:20px;background:#f0f0f0"></div>
<div class="t" style="left:90px;top:518px;font-size:11px;line-height:12px;color:#2a2a2a;"><svg class="g j"><use href="#u52fe"/></svg><svg class="g j"><use href="#u914d"/></svg>135</div>
<div class="abs" style="left:58px;top:539px;width:98px;height:20px;background:#f0f0f0"></div>
<div class="t" style="left:90px;top:542px;font-size:11px;line-height:12px;color:#2a2a2a;"><svg class="g j"><use href="#u62bc"/></svg><svg class="g n"><use href="#u3057"/></svg><svg class="g j"><use href="#u51fa"/></svg><svg class="g n"><use href="#u3057"/></svg>145</div>
<div class="abs" style="left:58px;top:563px;width:98px;height:20px;background:#f0f0f0"></div>
<div class="t" style="left:90px;top:566px;font-size:11px;line-height:12px;color:#2a2a2a;"><svg class="g j"><use href="#u62bc"/></svg><svg class="g n"><use href="#u3057"/></svg><svg class="g j"><use href="#u51fa"/></svg><svg class="g n"><use href="#u3057"/></svg>160</div>
<div class="abs" style="left:58px;top:587px;width:98px;height:20px;background:#f0f0f0"></div>
<div class="t" style="left:90px;top:590px;font-size:11px;line-height:12px;color:#2a2a2a;"><svg class="g j"><use href="#u62bc"/></svg><svg class="g n"><use href="#u3057"/></svg><svg class="g j"><use href="#u51fa"/></svg><svg class="g n"><use href="#u3057"/></svg>162</div>
<div class="abs" style="left:58px;top:611px;width:98px;height:20px;background:#f0f0f0"></div>
<div class="t" style="left:90px;top:614px;font-size:11px;line-height:12px;color:#2a2a2a;"><svg class="g j"><use href="#u62bc"/></svg><svg class="g n"><use href="#u3057"/></svg><svg class="g j"><use href="#u51fa"/></svg><svg class="g n"><use href="#u3057"/></svg>166</div>
<div class="abs" style="left:58px;top:635px;width:98px;height:20px;background:#f0f0f0"></div>
<div class="t" style="left:90px;top:638px;font-size:11px;line-height:12px;color:#2a2a2a;"><svg class="g j"><use href="#u62bc"/></svg><svg class="g n"><use href="#u3057"/></svg><svg class="g j"><use href="#u51fa"/></svg><svg class="g n"><use href="#u3057"/></svg>167</div>
<div class="abs" style="left:58px;top:659px;width:98px;height:20px;background:#f0f0f0"></div>
<div class="t" style="left:90px;top:662px;font-size:11px;line-height:12px;color:#2a2a2a;"><svg class="g j"><use href="#u62bc"/></svg><svg class="g n"><use href="#u3057"/></svg><svg class="g j"><use href="#u51fa"/></svg><svg class="g n"><use href="#u3057"/></svg>168</div>
<div class="abs" style="left:58px;top:683px;width:98px;height:20px;background:#f0f0f0"></div>
<div class="t" style="left:90px;top:686px;font-size:11px;line-height:12px;color:#2a2a2a;"><svg class="g j"><use href="#u62bc"/></svg><svg class="g n"><use href="#u3057"/></svg><svg class="g j"><use href="#u51fa"/></svg><svg class="g n"><use href="#u3057"/></svg>170</div>
<div class="abs" style="left:58px;top:707px;width:98px;height:20px;background:#f0f0f0"></div>
<div class="t" style="left:90px;top:710px;font-size:11px;line-height:12px;color:#2a2a2a;"><svg class="g j"><use href="#u62bc"/></svg><svg class="g n"><use href="#u3057"/></svg><svg class="g j"><use href="#u51fa"/></svg><svg class="g n"><use href="#u3057"/></svg>187</div>
<div class="abs" style="left:58px;top:731px;width:98px;height:20px;background:#f0f0f0"></div>
<div class="t" style="left:90px;top:734px;font-size:11px;line-height:12px;color:#2a2a2a;"><svg class="g j"><use href="#u62bc"/></svg><svg class="g n"><use href="#u3057"/></svg><svg class="g j"><use href="#u51fa"/></svg><svg class="g n"><use href="#u3057"/></svg>195</div>
<div class="abs" style="left:58px;top:755px;width:98px;height:20px;background:#f0f0f0"></div>
<div class="t" style="left:90px;top:758px;font-size:11px;line-height:12px;color:#2a2a2a;"><svg class="g j"><use href="#u62bc"/></svg><svg class="g n"><use href="#u3057"/></svg><svg class="g j"><use href="#u51fa"/></svg><svg class="g n"><use href="#u3057"/></svg>209</div>
<div class="abs" style="left:58px;top:779px;width:80px;height:20px;background:#f0f0f0"></div>
<div class="t" style="left:90px;top:782px;font-size:11px;line-height:12px;color:#2a2a2a;"><svg class="g j"><use href="#u52fe"/></svg><svg class="g j"><use href="#u914d"/></svg>210</div>
<div class="abs" style="left:58px;top:803px;width:80px;height:20px;background:#f0f0f0"></div>
<div class="t" style="left:90px;top:806px;font-size:11px;line-height:12px;color:#2a2a2a;"><svg class="g j"><use href="#u52fe"/></svg><svg class="g j"><use href="#u914d"/></svg>211</div>
<div class="abs" style="left:58px;top:827px;width:98px;height:20px;background:#f0f0f0"></div>
<div class="t" style="left:90px;top:830px;font-size:11px;line-height:12px;color:#2a2a2a;"><svg class="g j"><use href="#u62bc"/></svg><svg class="g n"><use href="#u3057"/></svg><svg class="g j"><use href="#u51fa"/></svg><svg class="g n"><use href="#u3057"/></svg>218</div>
<div class="abs" style="left:58px;top:851px;width:98px;height:20px;background:#f0f0f0"></div>
<div class="t" style="left:90px;top:854px;font-size:11px;line-height:12px;color:#2a2a2a;"><svg class="g j"><use href="#u62bc"/></svg><svg class="g n"><use href="#u3057"/></svg><svg class="g j"><use href="#u51fa"/></svg><svg class="g n"><use href="#u3057"/></svg>364</div>
<div class="abs" style="left:58px;top:875px;width:98px;height:20px;background:#f0f0f0"></div>
<div class="t" style="left:90px;top:878px;font-size:11px;line-height:12px;color:#2a2a2a;"><svg class="g j"><use href="#u62bc"/></svg><svg class="g n"><use href="#u3057"/></svg><svg class="g j"><use href="#u51fa"/></svg><svg class="g n"><use href="#u3057"/></svg>366</div>
<div class="abs" style="left:58px;top:899px;width:98px;height:20px;background:#f0f0f0"></div>
<div class="t" style="left:90px;top:902px;font-size:11px;line-height:12px;color:#2a2a2a;"><svg class="g j"><use href="#u62bc"/></svg><svg class="g n"><use href="#u3057"/></svg><svg class="g j"><use href="#u51fa"/></svg><svg class="g n"><use href="#u3057"/></svg>371</div>
<div class="abs" style="left:58px;top:923px;width:98px;height:20px;background:#f0f0f0"></div>
<div class="t" style="left:90px;top:926px;font-size:11px;line-height:12px;color:#2a2a2a;"><svg class="g j"><use href="#u62bc"/></svg><svg class="g n"><use href="#u3057"/></svg><svg class="g j"><use href="#u51fa"/></svg><svg class="g n"><use href="#u3057"/></svg>372</div>
<div class="abs" style="left:58px;top:947px;width:98px;height:20px;background:#f0f0f0"></div>
<div class="t" style="left:90px;top:950px;font-size:11px;line-height:12px;color:#2a2a2a;"><svg class="g j"><use href="#u62bc"/></svg><svg class="g n"><use href="#u3057"/></svg><svg class="g j"><use href="#u51fa"/></svg><svg class="g n"><use href="#u3057"/></svg>373</div>
<div class="abs" style="left:58px;top:971px;width:98px;height:20px;background:#f0f0f0"></div>
<div class="t" style="left:90px;top:974px;font-size:11px;line-height:12px;color:#2a2a2a;"><svg class="g j"><use href="#u62bc"/></svg><svg class="g n"><use href="#u3057"/></svg><svg class="g j"><use href="#u51fa"/></svg><svg class="g n"><use href="#u3057"/></svg>374</div>
<svg class="abs" style="left:0;top:0" width="310" height="1000" viewBox="0 0 310 1000"><path d="M21 195h11v-11z" fill="#666" stroke="#222" stroke-width="1"/><path d="M43 189q8-7 16 0q-8 7-16 0z" fill="#9a9a9a"/><circle cx="51" cy="189" r="2.6" fill="#f0f0f0"/><circle cx="51" cy="189" r="1.4" fill="#9a9a9a"/><path d="M69 184l3-3h11v13l-3 3h-11z" fill="#e9ecf2" stroke="#333" stroke-width="1"/><path d="M69 184h11v13M80 184l3-3" stroke="#333" stroke-width=".9" fill="none"/><circle cx="173.5" cy="189.5" r="6" fill="#fff" stroke="#222" stroke-width="1.2"/><circle cx="173.5" cy="189.5" r="2.3" fill="#222"/><path d="M40.5 205.5l8 6.5-8 6.5z" fill="#fff" stroke="#222" stroke-width="1.2"/><circle cx="69" cy="212" r="6" fill="#9a9a9a" stroke="#9a9a9a" stroke-width="3" stroke-dasharray="2.2 1.7"/><circle cx="69" cy="212" r="2.5" fill="#f0f0f0"/><path d="M40.5 229.5l8 6.5-8 6.5z" fill="#fff" stroke="#222" stroke-width="1.2"/><path d="M61 229h7l1 2h8v11h-16z" fill="#9c9c9c"/><path d="M61 232h16" stroke="#f0f0f0" stroke-width="1"/><path d="M40.5 253.5l8 6.5-8 6.5z" fill="#fff" stroke="#222" stroke-width="1.2"/><path d="M61 260q8-7 16 0q-8 7-16 0z" fill="none" stroke="#b5b5b5" stroke-width="1.2"/><path d="M63 254l12 12" stroke="#b5b5b5" stroke-width="1.2"/><path d="M86 253h7l1 2h8v11h-16z" fill="#9c9c9c"/><path d="M86 256h16" stroke="#f0f0f0" stroke-width="1"/><path d="M40.5 277.5l8 6.5-8 6.5z" fill="#fff" stroke="#222" stroke-width="1.2"/><path d="M61 284q8-7 16 0q-8 7-16 0z" fill="#a5a5a5"/><circle cx="69" cy="284" r="2.4" fill="#f0f0f0"/><circle cx="69" cy="284" r="1.2" fill="#a5a5a5"/><path d="M86 277h7l1 2h8v11h-16z" fill="#9c9c9c"/><path d="M86 280h16" stroke="#f0f0f0" stroke-width="1"/><path d="M40.5 301.5l8 6.5-8 6.5z" fill="#fff" stroke="#222" stroke-width="1.2"/><path d="M61 308q8-7 16 0q-8 7-16 0z" fill="#a5a5a5"/><circle cx="69" cy="308" r="2.4" fill="#f0f0f0"/><circle cx="69" cy="308" r="1.2" fill="#a5a5a5"/><path d="M86 301h7l1 2h8v11h-16z" fill="#9c9c9c"/><path d="M86 304h16" stroke="#f0f0f0" stroke-width="1"/><path d="M61 337h11l3-3v3l-3 3h-11z" fill="#bdbdbd"/><path d="M61 328l3-3h10v10l-3 3h-10z" fill="#5aa8e6" stroke="#2d6fa8" stroke-width=".6"/><path d="M61 328h10l3-3M71 328v10" stroke="#cfe8fb" stroke-width=".8" fill="none"/><path d="M77 338v-12M75.5 328l1.5-3 1.5 3" stroke="#222" stroke-width="1.1" fill="none"/><path d="M61 361h11l3-3v3l-3 3h-11z" fill="#bdbdbd"/><path d="M61 352l3-3h10v10l-3 3h-10z" fill="#5aa8e6" stroke="#2d6fa8" stroke-width=".6"/><path d="M61 352h10l3-3M71 352v10" stroke="#cfe8fb" stroke-width=".8" fill="none"/><path d="M77 362v-12M75.5 352l1.5-3 1.5 3" stroke="#222" stroke-width="1.1" fill="none"/><path d="M61 385h11l3-3v3l-3 3h-11z" fill="#bdbdbd"/><path d="M61 376l3-3h10v10l-3 3h-10z" fill="#5aa8e6" stroke="#2d6fa8" stroke-width=".6"/><path d="M61 376h10l3-3M71 376v10" stroke="#cfe8fb" stroke-width=".8" fill="none"/><path d="M77 386v-12M75.5 376l1.5-3 1.5 3" stroke="#222" stroke-width="1.1" fill="none"/><path d="M62 401l5-5h9v15l-3 3h-11z" fill="#e8e8e8" stroke="#555" stroke-width=".9"/><path d="M63 402l5-5h7l-5 5z" fill="#5aa8e6"/><path d="M61 433h11l3-3v3l-3 3h-11z" fill="#bdbdbd"/><path d="M61 424l3-3h10v10l-3 3h-10z" fill="#5aa8e6" stroke="#2d6fa8" stroke-width=".6"/><path d="M61 424h10l3-3M71 424v10" stroke="#cfe8fb" stroke-width=".8" fill="none"/><path d="M77 434v-12M75.5 424l1.5-3 1.5 3" stroke="#222" stroke-width="1.1" fill="none"/><path d="M61 457h11l3-3v3l-3 3h-11z" fill="#bdbdbd"/><path d="M61 448l3-3h10v10l-3 3h-10z" fill="#5aa8e6" stroke="#2d6fa8" stroke-width=".6"/><path d="M61 448h10l3-3M71 448v10" stroke="#cfe8fb" stroke-width=".8" fill="none"/><path d="M77 458v-12M75.5 448l1.5-3 1.5 3" stroke="#222" stroke-width="1.1" fill="none"/><path d="M61 481h11l3-3v3l-3 3h-11z" fill="#bdbdbd"/><path d="M61 472l3-3h10v10l-3 3h-10z" fill="#5aa8e6" stroke="#2d6fa8" stroke-width=".6"/><path d="M61 472h10l3-3M71 472v10" stroke="#cfe8fb" stroke-width=".8" fill="none"/><path d="M77 482v-12M75.5 472l1.5-3 1.5 3" stroke="#222" stroke-width="1.1" fill="none"/><path d="M62 506v-8l4-5h5v13z" fill="#e8e8e8" stroke="#555" stroke-width=".9"/><path d="M68 495l5-3 4 9-5 3z" fill="#4f9fe0"/><path d="M72 492l3 7" stroke="#222" stroke-width="1"/><path d="M62 530v-8l4-5h5v13z" fill="#e8e8e8" stroke="#555" stroke-width=".9"/><path d="M68 519l5-3 4 9-5 3z" fill="#4f9fe0"/><path d="M72 516l3 7" stroke="#222" stroke-width="1"/><path d="M61 553h11l3-3v3l-3 3h-11z" fill="#bdbdbd"/><path d="M61 544l3-3h10v10l-3 3h-10z" fill="#5aa8e6" stroke="#2d6fa8" stroke-width=".6"/><path d="M61 544h10l3-3M71 544v10" stroke="#cfe8fb" stroke-width=".8" fill="none"/><path d="M77 554v-12M75.5 544l1.5-3 1.5 3" stroke="#222" stroke-width="1.1" fill="none"/><path d="M61 577h11l3-3v3l-3 3h-11z" fill="#bdbdbd"/><path d="M61 568l3-3h10v10l-3 3h-10z" fill="#5aa8e6" stroke="#2d6fa8" stroke-width=".6"/><path d="M61 568h10l3-3M71 568v10" stroke="#cfe8fb" stroke-width=".8" fill="none"/><path d="M77 578v-12M75.5 568l1.5-3 1.5 3" stroke="#222" stroke-width="1.1" fill="none"/><path d="M61 601h11l3-3v3l-3 3h-11z" fill="#bdbdbd"/><path d="M61 592l3-3h10v10l-3 3h-10z" fill="#5aa8e6" stroke="#2d6fa8" stroke-width=".6"/><path d="M61 592h10l3-3M71 592v10" stroke="#cfe8fb" stroke-width=".8" fill="none"/><path d="M77 602v-12M75.5 592l1.5-3 1.5 3" stroke="#222" stroke-width="1.1" fill="none"/><path d="M61 625h11l3-3v3l-3 3h-11z" fill="#bdbdbd"/><path d="M61 616l3-3h10v10l-3 3h-10z" fill="#5aa8e6" stroke="#2d6fa8" stroke-width=".6"/><path d="M61 616h10l3-3M71 616v10" stroke="#cfe8fb" stroke-width=".8" fill="none"/><path d="M77 626v-12M75.5 616l1.5-3 1.5 3" stroke="#222" stroke-width="1.1" fill="none"/><path d="M61 649h11l3-3v3l-3 3h-11z" fill="#bdbdbd"/><path d="M61 640l3-3h10v10l-3 3h-10z" fill="#5aa8e6" stroke="#2d6fa8" stroke-width=".6"/><path d="M61 640h10l3-3M71 640v10" stroke="#cfe8fb" stroke-width=".8" fill="none"/><path d="M77 650v-12M75.5 640l1.5-3 1.5 3" stroke="#222" stroke-width="1.1" fill="none"/><path d="M61 673h11l3-3v3l-3 3h-11z" fill="#bdbdbd"/><path d="M61 664l3-3h10v10l-3 3h-10z" fill="#5aa8e6" stroke="#2d6fa8" stroke-width=".6"/><path d="M61 664h10l3-3M71 664v10" stroke="#cfe8fb" stroke-width=".8" fill="none"/><path d="M77 674v-12M75.5 664l1.5-3 1.5 3" stroke="#222" stroke-width="1.1" fill="none"/><path d="M61 697h11l3-3v3l-3 3h-11z" fill="#bdbdbd"/><path d="M61 688l3-3h10v10l-3 3h-10z" fill="#5aa8e6" stroke="#2d6fa8" stroke-width=".6"/><path d="M61 688h10l3-3M71 688v10" stroke="#cfe8fb" stroke-width=".8" fill="none"/><path d="M77 698v-12M75.5 688l1.5-3 1.5 3" stroke="#222" stroke-width="1.1" fill="none"/><path d="M61 721h11l3-3v3l-3 3h-11z" fill="#bdbdbd"/><path d="M61 712l3-3h10v10l-3 3h-10z" fill="#5aa8e6" stroke="#2d6fa8" stroke-width=".6"/><path d="M61 712h10l3-3M71 712v10" stroke="#cfe8fb" stroke-width=".8" fill="none"/><path d="M77 722v-12M75.5 712l1.5-3 1.5 3" stroke="#222" stroke-width="1.1" fill="none"/><path d="M61 745h11l3-3v3l-3 3h-11z" fill="#bdbdbd"/><path d="M61 736l3-3h10v10l-3 3h-10z" fill="#5aa8e6" stroke="#2d6fa8" stroke-width=".6"/><path d="M61 736h10l3-3M71 736v10" stroke="#cfe8fb" stroke-width=".8" fill="none"/><path d="M77 746v-12M75.5 736l1.5-3 1.5 3" stroke="#222" stroke-width="1.1" fill="none"/><path d="M61 769h11l3-3v3l-3 3h-11z" fill="#bdbdbd"/><path d="M61 760l3-3h10v10l-3 3h-10z" fill="#5aa8e6" stroke="#2d6fa8" stroke-width=".6"/><path d="M61 760h10l3-3M71 760v10" stroke="#cfe8fb" stroke-width=".8" fill="none"/><path d="M77 770v-12M75.5 760l1.5-3 1.5 3" stroke="#222" stroke-width="1.1" fill="none"/><path d="M62 794v-8l4-5h5v13z" fill="#e8e8e8" stroke="#555" stroke-width=".9"/><path d="M68 783l5-3 4 9-5 3z" fill="#4f9fe0"/><path d="M72 780l3 7" stroke="#222" stroke-width="1"/><path d="M62 818v-8l4-5h5v13z" fill="#e8e8e8" stroke="#555" stroke-width=".9"/><path d="M68 807l5-3 4 9-5 3z" fill="#4f9fe0"/><path d="M72 804l3 7" stroke="#222" stroke-width="1"/><path d="M61 841h11l3-3v3l-3 3h-11z" fill="#bdbdbd"/><path d="M61 832l3-3h10v10l-3 3h-10z" fill="#5aa8e6" stroke="#2d6fa8" stroke-width=".6"/><path d="M61 832h10l3-3M71 832v10" stroke="#cfe8fb" stroke-width=".8" fill="none"/><path d="M77 842v-12M75.5 832l1.5-3 1.5 3" stroke="#222" stroke-width="1.1" fill="none"/><path d="M61 865h11l3-3v3l-3 3h-11z" fill="#bdbdbd"/><path d="M61 856l3-3h10v10l-3 3h-10z" fill="#5aa8e6" stroke="#2d6fa8" stroke-width=".6"/><path d="M61 856h10l3-3M71 856v10" stroke="#cfe8fb" stroke-width=".8" fill="none"/><path d="M77 866v-12M75.5 856l1.5-3 1.5 3" stroke="#222" stroke-width="1.1" fill="none"/><path d="M61 889h11l3-3v3l-3 3h-11z" fill="#bdbdbd"/><path d="M61 880l3-3h10v10l-3 3h-10z" fill="#5aa8e6" stroke="#2d6fa8" stroke-width=".6"/><path d="M61 880h10l3-3M71 880v10" stroke="#cfe8fb" stroke-width=".8" fill="none"/><path d="M77 890v-12M75.5 880l1.5-3 1.5 3" stroke="#222" stroke-width="1.1" fill="none"/><path d="M61 913h11l3-3v3l-3 3h-11z" fill="#bdbdbd"/><path d="M61 904l3-3h10v10l-3 3h-10z" fill="#5aa8e6" stroke="#2d6fa8" stroke-width=".6"/><path d="M61 904h10l3-3M71 904v10" stroke="#cfe8fb" stroke-width=".8" fill="none"/><path d="M77 914v-12M75.5 904l1.5-3 1.5 3" stroke="#222" stroke-width="1.1" fill="none"/><path d="M61 937h11l3-3v3l-3 3h-11z" fill="#bdbdbd"/><path d="M61 928l3-3h10v10l-3 3h-10z" fill="#5aa8e6" stroke="#2d6fa8" stroke-width=".6"/><path d="M61 928h10l3-3M71 928v10" stroke="#cfe8fb" stroke-width=".8" fill="none"/><path d="M77 938v-12M75.5 928l1.5-3 1.5 3" stroke="#222" stroke-width="1.1" fill="none"/><path d="M61 961h11l3-3v3l-3 3h-11z" fill="#bdbdbd"/><path d="M61 952l3-3h10v10l-3 3h-10z" fill="#5aa8e6" stroke="#2d6fa8" stroke-width=".6"/><path d="M61 952h10l3-3M71 952v10" stroke="#cfe8fb" stroke-width=".8" fill="none"/><path d="M77 962v-12M75.5 952l1.5-3 1.5 3" stroke="#222" stroke-width="1.1" fill="none"/><path d="M61 985h11l3-3v3l-3 3h-11z" fill="#bdbdbd"/><path d="M61 976l3-3h10v10l-3 3h-10z" fill="#5aa8e6" stroke="#2d6fa8" stroke-width=".6"/><path d="M61 976h10l3-3M71 976v10" stroke="#cfe8fb" stroke-width=".8" fill="none"/><path d="M77 986v-12M75.5 976l1.5-3 1.5 3" stroke="#222" stroke-width="1.1" fill="none"/></svg>
<!-- comment panel -->
<div class="abs" style="left:4px;top:1018px;width:301px;height:26px;background:#f2f2f2;border:1px solid #cfcfcf"></div>
<div class="t" style="left:28px;top:1025px;font-size:10.5px;color:#555"><svg class="g n"><use href="#u30b3"/></svg><svg class="g n"><use href="#u30e1"/></svg><svg class="g n"><use href="#u30f3"/></svg><svg class="g n"><use href="#u30c8"/></svg></div>
<svg class="abs" style="left:280px;top:1022px" width="24" height="17"><circle cx="7.5" cy="9" r="5" fill="#222"/><path d="M4.7 9h5.6M7.5 6.2v5.6" stroke="#fff" stroke-width="1.4"/><path d="M19.5 3v12M22.5 6v7" stroke="#777" stroke-width="1"/></svg>
<!-- nav bar -->
<div class="abs" style="left:841px;top:1020.5px;width:237px;height:23px;background:#f1f1f1"></div>
<svg class="abs" style="left:841px;top:1020px" width="240" height="24" viewBox="841 1020 240 24">
<path d="M852 1025v16M849 1028l3-4 3 4" stroke="#333" stroke-width="1.6" fill="none"/><path d="M845 1034q7-5 14 0q-4 4-11 2" stroke="#333" stroke-width="1.4" fill="none"/><path d="M866 1031h5l-2.5 3z" fill="#333"/>
<rect x="877" y="1028" width="17" height="11" fill="#fff" stroke="#444" stroke-width="1.2"/><rect x="880" y="1031" width="11" height="4" fill="#9ab"/><path d="M879 1027l3-3 2 2 4-2 3 3" stroke="#555" fill="none"/>
<path d="M906 1040q-3-3-4.5-7q-.5-2 1.5-1.5l1.5 2v-8.5q1-1.5 2 0v7v-9q1-1.5 2 0v9v-8q1-1.5 2 0v8v-6q1-1.5 2 0v8q0 4-2 6z" fill="#fff" stroke="#333" stroke-width="1"/>
<circle cx="935" cy="1032" r="5" fill="#e8f4f8" stroke="#333" stroke-width="1.5"/><path d="M938.5 1035.5l4 4" stroke="#333" stroke-width="2.2"/><path d="M943 1025h4M945 1023v4M943 1029h4" stroke="#333" stroke-width="1"/>
<rect x="955" y="1024" width="15" height="15" fill="none" stroke="#555" stroke-dasharray="1.5 1.5" stroke-width=".8"/><circle cx="962" cy="1030" r="5.5" fill="#e8f4f8" stroke="#333" stroke-width="1.5"/><path d="M966 1034l4 4" stroke="#333" stroke-width="2.2"/><path d="M975 1031h5l-2.5 3z" fill="#333"/>
<rect x="988" y="1024" width="16" height="12" rx="1" fill="#8fb4e0" stroke="#444" stroke-width="1.3"/><path d="M993 1039h6M996 1036v3" stroke="#444" stroke-width="1.3"/><path d="M1006 1031h5l-2.5 3z" fill="#333"/>
<rect x="1019.5" y="1024.5" width="15" height="14" fill="#fafafa" stroke="#555" stroke-width="1"/><path d="M1019.5 1028h15M1019.5 1031.5h15M1019.5 1035h15M1023.2 1024.5v14M1027 1024.5v14M1030.8 1024.5v14" stroke="#6a6a6a" stroke-width="1"/><path d="M1038 1031h5l-2.5 3z" fill="#333"/>
<rect x="1050" y="1024" width="7" height="6" fill="#8fb4e0" stroke="#3a60a0" stroke-width="1.2"/><rect x="1059" y="1024" width="7" height="6" fill="#8fb4e0" stroke="#3a60a0" stroke-width="1.2"/><rect x="1050" y="1032" width="7" height="6" fill="#8fb4e0" stroke="#3a60a0" stroke-width="1.2"/><rect x="1059" y="1032" width="7" height="6" fill="#8fb4e0" stroke="#3a60a0" stroke-width="1.2"/><path d="M1069 1031h5l-2.5 3z" fill="#333"/>
</svg>
<!-- view cube -->
<svg class="abs" style="left:1800px;top:150px" width="115" height="115" viewBox="1800 150 115 115">
<defs><radialGradient id="vcs" cx=".5" cy=".5" r=".5"><stop offset="0" stop-color="#888" stop-opacity=".5"/><stop offset="1" stop-color="#fff" stop-opacity="0"/></radialGradient>
<linearGradient id="vcl" x1="0" y1="0" x2="0" y2="1"><stop offset="0" stop-color="#f2f2f2"/><stop offset="1" stop-color="#e9e9e9"/></linearGradient>
<linearGradient id="vcr" x1="0" y1="0" x2="0" y2="1"><stop offset="0" stop-color="#eeeeee"/><stop offset="1" stop-color="#e0e0e0"/></linearGradient></defs>
<ellipse cx="1858" cy="244" rx="38" ry="14" fill="url(#vcs)"/>
<path d="M1856.7 173l34.8 15.2-34.8 19.7-35.3-19.7z" fill="#f0f0f0"/>
<path d="M1821.4 188.2l35.3 19.7v40.9l-31.1-21.6z" fill="url(#vcl)"/>
<path d="M1891.5 188.2l-34.8 19.7v40.9l30.6-21.6z" fill="url(#vcr)"/>
<path d="M1856.7 173l34.8 15.2-4.2 39-30.6 21.6-31.1-21.6-4.2-39z M1821.4 188.2l35.3 19.7 34.8-19.7 M1856.7 207.9v40.9" fill="none" stroke="#858585" stroke-width="1"/>
<g stroke="#8b8d92" stroke-width="1.2" fill="none" stroke-linecap="round">
<path transform="matrix(2.01 1.02 -1.25 0.64 1852.9 179.9)" vector-effect="non-scaling-stroke" d="M5 0L5 10M5 5L9 5M0 10L10 10"/>
<path transform="matrix(1.95 1.15 0.15 2.4 1829 203.5)" vector-effect="non-scaling-stroke" d="M2.5 0L3.5 1.5M7.5 0L6.5 1.5M0 2.5L10 2.5M1 4L1 10M1 4L5 4L5 10L4 9.5M1 6L5 6M1 8L5 8M7 4.5L7 8.5M9.5 3.5L9.5 10L8.5 9.3"/>
<path transform="matrix(2.0 -1.2 -0.1 2.3 1864.5 216)" vector-effect="non-scaling-stroke" d="M0 2.5L10 2.5M5 0L3.5 5L0 10M4 5.5L10 5.5L10 10L4 10Z"/>
</g>
<path d="M1856.7 173v-9.5" stroke="#5fd35f" stroke-width="1.8"/><text x="1852" y="163.5" font-family="Liberation Sans" font-size="11" fill="#7fdc7f">Y</text>
<path d="M1825.6 227.2l-7.5 3.6" stroke="#6f6fff" stroke-width="1.8"/><text x="1809.5" y="239" font-family="Liberation Sans" font-size="12" fill="#7373ff">Z</text>
<path d="M1887.3 227.2l7.5 3.6" stroke="#f39a9a" stroke-width="1.8"/><text x="1895.5" y="239" font-family="Liberation Sans" font-size="12" fill="#f38080">X</text>
</svg>
<!-- taskbar -->
<div class="abs" style="left:0;top:1048px;width:1920px;height:8px;background:#111"></div>
<div class="abs" style="left:48px;top:1048px;width:344px;height:8px;background:#f2f2f2;border-top:1px solid #bbb"></div>
<div class="abs" style="left:687px;top:1048px;width:48px;height:8px;background:#9b531d"></div>
<div class="abs" style="left:737px;top:1048px;width:47px;height:8px;background:#9b531d"></div>
<div class="abs" style="left:835px;top:1048px;width:48px;height:8px;background:#333"></div>
<div class="abs" style="left:1914px;top:1048px;width:2px;height:8px;background:#666"></div>
<div class="abs" style="left:1920px;top:1048px;width:8px;height:8px;background:#fff"></div>

</body></html>
